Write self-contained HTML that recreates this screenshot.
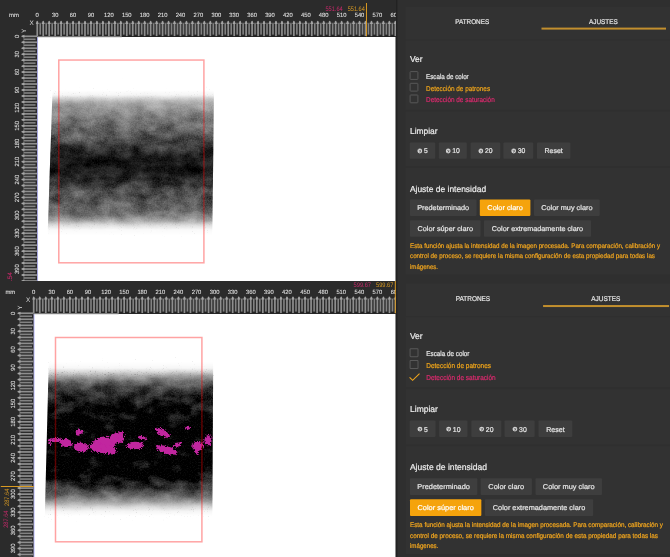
<!DOCTYPE html>
<html><head><meta charset="utf-8"><style>
html,body{margin:0;padding:0;}
body{width:670px;height:557px;overflow:hidden;background:#2a2a2a;position:relative;font-family:"Liberation Sans",sans-serif;}
.half{position:absolute;left:0;width:670px;overflow:hidden;will-change:transform;}
svg{position:absolute;left:0;top:0;font-family:"Liberation Sans",sans-serif;text-rendering:geometricPrecision;}
</style></head><body>

<div class="half" style="top:0px;height:281px;">
<svg width="670" height="281" viewBox="0 0 670 281">
<g transform=""><rect x="396" y="0" width="274" height="300" fill="#2c2c2c"/>
<rect x="398" y="0" width="272" height="300" fill="#2f2f2f"/>
<rect x="396" y="0" width="1.2" height="300" fill="#222222"/>
<rect x="405.5" y="7" width="264.5" height="32.5" fill="#323232"/>
<rect x="405.5" y="40.5" width="264.5" height="69.3" fill="#323232"/>
<rect x="405.5" y="111.4" width="264.5" height="54.900000000000006" fill="#323232"/>
<rect x="405.5" y="167.8" width="264.5" height="106.69999999999999" fill="#323232"/>
<text x="472.20" y="23.90" font-size="6.9" fill="#e4e4e4" stroke="#e4e4e4" stroke-width="0.2" text-anchor="middle" textLength="34.00" lengthAdjust="spacingAndGlyphs">PATRONES</text>
<text x="603.40" y="23.90" font-size="6.9" fill="#e4e4e4" stroke="#e4e4e4" stroke-width="0.2" text-anchor="middle" textLength="28.80" lengthAdjust="spacingAndGlyphs">AJUSTES</text>
<rect x="541.5" y="27.6" width="124.5" height="2" fill="#c28f2e"/>
<text x="409.90" y="62.20" font-size="8.6" fill="#ececec" stroke="#ececec" stroke-width="0.2" textLength="12.60" lengthAdjust="spacingAndGlyphs">Ver</text>
<rect x="410.1" y="71.60" width="7.8" height="7.8" fill="none" stroke="#585858" stroke-width="1" rx="0.6"/>
<text x="426.10" y="78.80" font-size="7.1" fill="#e8e8e8" stroke="#e8e8e8" stroke-width="0.2" textLength="42.60" lengthAdjust="spacingAndGlyphs">Escala de color</text>
<rect x="410.1" y="83.30" width="7.8" height="7.8" fill="none" stroke="#585858" stroke-width="1" rx="0.6"/>
<text x="426.10" y="90.50" font-size="7.1" fill="#f0a51a" stroke="#f0a51a" stroke-width="0.2" textLength="64.00" lengthAdjust="spacingAndGlyphs">Detección de patrones</text>
<rect x="410.1" y="95.00" width="7.8" height="7.8" fill="none" stroke="#585858" stroke-width="1" rx="0.6"/>
<text x="426.10" y="102.20" font-size="7.1" fill="#dc2a6e" stroke="#dc2a6e" stroke-width="0.2" textLength="68.60" lengthAdjust="spacingAndGlyphs">Detección de saturación</text>
<text x="410.00" y="134.30" font-size="8.6" fill="#ececec" stroke="#ececec" stroke-width="0.2" textLength="27.60" lengthAdjust="spacingAndGlyphs">Limpiar</text>
<rect x="409.70" y="142.4" width="25.50" height="16.3" fill="#3e3e3e" rx="1"/>
<circle cx="419.80" cy="151.0" r="2.4" fill="#d4d4d4"/>
<path d="M418.40 149.6 l2.6 2.6 M419.60 152.6 l1.2 -2.8" stroke="#3e3e3e" stroke-width="0.55" fill="none"/>
<text x="423.90" y="153.40" font-size="7.0" fill="#e8e8e8" stroke="#e8e8e8" stroke-width="0.2" textLength="3.70" lengthAdjust="spacingAndGlyphs">5</text>
<rect x="438.80" y="142.4" width="28.00" height="16.3" fill="#3e3e3e" rx="1"/>
<circle cx="448.20" cy="151.0" r="2.4" fill="#d4d4d4"/>
<path d="M446.80 149.6 l2.6 2.6 M448.00 152.6 l1.2 -2.8" stroke="#3e3e3e" stroke-width="0.55" fill="none"/>
<text x="452.30" y="153.40" font-size="7.0" fill="#e8e8e8" stroke="#e8e8e8" stroke-width="0.2" textLength="7.60" lengthAdjust="spacingAndGlyphs">10</text>
<rect x="470.60" y="142.4" width="29.70" height="16.3" fill="#3e3e3e" rx="1"/>
<circle cx="480.85" cy="151.0" r="2.4" fill="#d4d4d4"/>
<path d="M479.45 149.6 l2.6 2.6 M480.65 152.6 l1.2 -2.8" stroke="#3e3e3e" stroke-width="0.55" fill="none"/>
<text x="484.95" y="153.40" font-size="7.0" fill="#e8e8e8" stroke="#e8e8e8" stroke-width="0.2" textLength="7.60" lengthAdjust="spacingAndGlyphs">20</text>
<rect x="503.40" y="142.4" width="29.80" height="16.3" fill="#3e3e3e" rx="1"/>
<circle cx="513.70" cy="151.0" r="2.4" fill="#d4d4d4"/>
<path d="M512.30 149.6 l2.6 2.6 M513.50 152.6 l1.2 -2.8" stroke="#3e3e3e" stroke-width="0.55" fill="none"/>
<text x="517.80" y="153.40" font-size="7.0" fill="#e8e8e8" stroke="#e8e8e8" stroke-width="0.2" textLength="7.60" lengthAdjust="spacingAndGlyphs">30</text>
<rect x="537.00" y="142.4" width="33.40" height="16.3" fill="#3e3e3e" rx="1"/>
<text x="553.70" y="153.40" font-size="7.0" fill="#e8e8e8" stroke="#e8e8e8" stroke-width="0.2" text-anchor="middle" textLength="18.20" lengthAdjust="spacingAndGlyphs">Reset</text>
<text x="409.90" y="192.00" font-size="8.6" fill="#ececec" stroke="#ececec" stroke-width="0.2" textLength="76.20" lengthAdjust="spacingAndGlyphs">Ajuste de intensidad</text>
<rect x="409.90" y="199.6" width="66.60" height="16.40" fill="#3e3e3e" rx="1"/>
<text x="443.20" y="210.30" font-size="7.0" fill="#e6e6e6" stroke="#e6e6e6" stroke-width="0.2" text-anchor="middle" textLength="52.00" lengthAdjust="spacingAndGlyphs">Predeterminado</text>
<rect x="479.80" y="199.6" width="50.60" height="16.40" fill="#f5a30c" rx="1"/>
<text x="505.10" y="210.30" font-size="7.0" fill="#ffffff" stroke="#ffffff" stroke-width="0.2" text-anchor="middle" textLength="35.50" lengthAdjust="spacingAndGlyphs">Color claro</text>
<rect x="534.00" y="199.6" width="65.70" height="16.40" fill="#3e3e3e" rx="1"/>
<text x="566.85" y="210.30" font-size="7.0" fill="#e6e6e6" stroke="#e6e6e6" stroke-width="0.2" text-anchor="middle" textLength="51.20" lengthAdjust="spacingAndGlyphs">Color muy claro</text>
<rect x="410.00" y="220.2" width="70.50" height="16.60" fill="#3e3e3e" rx="1"/>
<text x="445.25" y="231.00" font-size="7.0" fill="#e6e6e6" stroke="#e6e6e6" stroke-width="0.2" text-anchor="middle" textLength="55.60" lengthAdjust="spacingAndGlyphs">Color súper claro</text>
<rect x="484.00" y="220.2" width="107.00" height="16.60" fill="#3e3e3e" rx="1"/>
<text x="537.50" y="231.00" font-size="7.0" fill="#e6e6e6" stroke="#e6e6e6" stroke-width="0.2" text-anchor="middle" textLength="91.30" lengthAdjust="spacingAndGlyphs">Color extremadamente claro</text>
<text x="410.00" y="247.90" font-size="6.7" fill="#f2a61e" stroke="#f2a61e" stroke-width="0.2" textLength="250.00" lengthAdjust="spacingAndGlyphs">Esta función ajusta la intensidad de la imagen procesada. Para comparación, calibración y</text>
<text x="410.00" y="258.35" font-size="6.7" fill="#f2a61e" stroke="#f2a61e" stroke-width="0.2" textLength="245.00" lengthAdjust="spacingAndGlyphs">control de proceso, se requiere la misma configuración de esta propiedad para todas las</text>
<text x="410.00" y="268.80" font-size="6.7" fill="#f2a61e" stroke="#f2a61e" stroke-width="0.2" textLength="28.00" lengthAdjust="spacingAndGlyphs">imágenes.</text></g>
<defs><clipPath id="vc0"><rect x="0" y="0" width="396" height="281"/></clipPath></defs>
<g clip-path="url(#vc0)">
<rect x="0" y="0" width="396" height="281" fill="#2b2b2b"/>
<rect x="37.25" y="37.00" width="358.75" height="244.70" fill="#ffffff"/>
<rect x="37.25" y="37.00" width="0.8" height="244.70" fill="#8080ff" opacity="0.6"/>
<rect x="395" y="37.00" width="1" height="244.70" fill="#8c8c8c"/>
<defs>
<linearGradient id="g1" x1="0" y1="90" x2="0" y2="235" gradientUnits="userSpaceOnUse"><stop offset="0.0000" stop-color="#000" stop-opacity="0.000"/><stop offset="0.0345" stop-color="#000" stop-opacity="0.040"/><stop offset="0.0552" stop-color="#000" stop-opacity="0.160"/><stop offset="0.0759" stop-color="#000" stop-opacity="0.280"/><stop offset="0.0966" stop-color="#000" stop-opacity="0.350"/><stop offset="0.1379" stop-color="#000" stop-opacity="0.420"/><stop offset="0.1793" stop-color="#000" stop-opacity="0.490"/><stop offset="0.2276" stop-color="#000" stop-opacity="0.560"/><stop offset="0.2759" stop-color="#000" stop-opacity="0.620"/><stop offset="0.3448" stop-color="#000" stop-opacity="0.680"/><stop offset="0.4138" stop-color="#000" stop-opacity="0.760"/><stop offset="0.4897" stop-color="#000" stop-opacity="0.850"/><stop offset="0.5724" stop-color="#000" stop-opacity="0.840"/><stop offset="0.6414" stop-color="#000" stop-opacity="0.740"/><stop offset="0.7034" stop-color="#000" stop-opacity="0.680"/><stop offset="0.7655" stop-color="#000" stop-opacity="0.660"/><stop offset="0.8276" stop-color="#000" stop-opacity="0.600"/><stop offset="0.8690" stop-color="#000" stop-opacity="0.500"/><stop offset="0.9034" stop-color="#000" stop-opacity="0.340"/><stop offset="0.9310" stop-color="#000" stop-opacity="0.140"/><stop offset="0.9655" stop-color="#000" stop-opacity="0.020"/><stop offset="1.0000" stop-color="#000" stop-opacity="0.000"/></linearGradient>
<clipPath id="c1"><polygon points="52.60,88.00 214.00,88.00 212.30,236.00 47.60,236.00"/></clipPath>
<filter id="f1" x="42.6" y="85" width="176.4" height="155" filterUnits="userSpaceOnUse" color-interpolation-filters="sRGB">
<feTurbulence type="fractalNoise" baseFrequency="0.06 0.09" numOctaves="4" seed="3" result="t"/>
<feColorMatrix in="t" type="matrix" values="0 0 0 0 0  0 0 0 0 0  0 0 0 0 0  1.2 0 0 0 -0.09999999999999998" result="n"/>
<feTurbulence type="fractalNoise" baseFrequency="0.7" numOctaves="2" seed="10" result="t2"/>
<feColorMatrix in="t2" type="matrix" values="0 0 0 0 0  0 0 0 0 0  0 0 0 0 0  1.6 0 0 0 -0.30000000000000004" result="n2"/>
<feComposite in="SourceGraphic" in2="n" operator="arithmetic" k1="0.55" k2="0.73" k3="0" k4="0" result="m"/>
<feComposite in="m" in2="n2" operator="arithmetic" k1="0.18" k2="0.91" k3="0" k4="0"/>
</filter>
</defs>
<g clip-path="url(#c1)"><g filter="url(#f1)"><rect x="45.6" y="90" width="170.4" height="145" fill="url(#g1)"/></g></g><defs><linearGradient id="band1" x1="0" y1="138" x2="0" y2="191" gradientUnits="userSpaceOnUse"><stop offset="0.000" stop-color="#000" stop-opacity="0"/><stop offset="0.245" stop-color="#000" stop-opacity="0.25"/><stop offset="0.434" stop-color="#000" stop-opacity="0.42"/><stop offset="0.623" stop-color="#000" stop-opacity="0.42"/><stop offset="0.811" stop-color="#000" stop-opacity="0.2"/><stop offset="1.000" stop-color="#000" stop-opacity="0"/></linearGradient></defs><g clip-path="url(#c1)"><rect x="46" y="138" width="170" height="53" fill="url(#band1)"/></g><defs><linearGradient id="sgt1" x1="0" y1="78" x2="0" y2="99" gradientUnits="userSpaceOnUse"><stop offset="0" stop-color="#000" stop-opacity="0.0"/><stop offset="1" stop-color="#000" stop-opacity="0.2"/></linearGradient>
<filter id="sft1" x="50" y="78" width="164" height="21" filterUnits="userSpaceOnUse" color-interpolation-filters="sRGB">
<feTurbulence type="fractalNoise" baseFrequency="0.93" numOctaves="1" seed="21" result="t"/>
<feColorMatrix in="t" type="matrix" values="0 0 0 0 0  0 0 0 0 0  0 0 0 0 0  1 0 0 0 0" result="n"/>
<feComposite in="SourceGraphic" in2="n" operator="arithmetic" k1="0" k2="3" k3="3" k4="-2.4000000000000004" result="s"/>
<feColorMatrix in="s" type="matrix" values="0 0 0 0 0  0 0 0 0 0  0 0 0 0 0  0 0 0 0.2 0"/>
</filter></defs>
<rect x="50" y="78" width="164" height="21" fill="url(#sgt1)" filter="url(#sft1)"/><defs><linearGradient id="sgt2" x1="0" y1="224" x2="0" y2="242" gradientUnits="userSpaceOnUse"><stop offset="0" stop-color="#000" stop-opacity="0.2"/><stop offset="1" stop-color="#000" stop-opacity="0.0"/></linearGradient>
<filter id="sft2" x="47" y="224" width="166" height="18" filterUnits="userSpaceOnUse" color-interpolation-filters="sRGB">
<feTurbulence type="fractalNoise" baseFrequency="0.93" numOctaves="1" seed="22" result="t"/>
<feColorMatrix in="t" type="matrix" values="0 0 0 0 0  0 0 0 0 0  0 0 0 0 0  1 0 0 0 0" result="n"/>
<feComposite in="SourceGraphic" in2="n" operator="arithmetic" k1="0" k2="3" k3="3" k4="-2.4000000000000004" result="s"/>
<feColorMatrix in="s" type="matrix" values="0 0 0 0 0  0 0 0 0 0  0 0 0 0 0  0 0 0 0.2 0"/>
</filter></defs>
<rect x="47" y="224" width="166" height="18" fill="url(#sgt2)" filter="url(#sft2)"/>
<rect x="37.25" y="22.70" width="358.75" height="0.9" fill="#5e5e5e"/>
<rect x="37.25" y="35.70" width="358.75" height="1.0" fill="#1e1e1e"/>
<rect x="36.40" y="21.20" width="1.7" height="14.90" fill="#8e8e8e"/>
<path d="M35.75 23.90 L37.25 20.50 L38.75 23.90 Z" fill="#a6a6a6"/>
<rect x="39.43" y="23.30" width="1.6" height="11.30" fill="#828282"/>
<rect x="42.37" y="21.20" width="1.7" height="14.90" fill="#8e8e8e"/>
<path d="M41.72 23.90 L43.22 20.50 L44.72 23.90 Z" fill="#a6a6a6"/>
<rect x="45.40" y="23.30" width="1.6" height="11.30" fill="#828282"/>
<rect x="48.34" y="21.20" width="1.7" height="14.90" fill="#8e8e8e"/>
<path d="M47.69 23.90 L49.19 20.50 L50.69 23.90 Z" fill="#a6a6a6"/>
<rect x="51.37" y="23.30" width="1.6" height="11.30" fill="#828282"/>
<rect x="54.30" y="21.20" width="1.7" height="14.90" fill="#8e8e8e"/>
<path d="M53.65 23.90 L55.15 20.50 L56.65 23.90 Z" fill="#a6a6a6"/>
<rect x="57.34" y="23.30" width="1.6" height="11.30" fill="#828282"/>
<rect x="60.27" y="21.20" width="1.7" height="14.90" fill="#8e8e8e"/>
<path d="M59.62 23.90 L61.12 20.50 L62.62 23.90 Z" fill="#a6a6a6"/>
<rect x="63.31" y="23.30" width="1.6" height="11.30" fill="#828282"/>
<rect x="66.24" y="21.20" width="1.7" height="14.90" fill="#8e8e8e"/>
<path d="M65.59 23.90 L67.09 20.50 L68.59 23.90 Z" fill="#a6a6a6"/>
<rect x="69.27" y="23.30" width="1.6" height="11.30" fill="#828282"/>
<rect x="72.21" y="21.20" width="1.7" height="14.90" fill="#8e8e8e"/>
<path d="M71.56 23.90 L73.06 20.50 L74.56 23.90 Z" fill="#a6a6a6"/>
<rect x="75.24" y="23.30" width="1.6" height="11.30" fill="#828282"/>
<rect x="78.18" y="21.20" width="1.7" height="14.90" fill="#8e8e8e"/>
<path d="M77.53 23.90 L79.03 20.50 L80.53 23.90 Z" fill="#a6a6a6"/>
<rect x="81.21" y="23.30" width="1.6" height="11.30" fill="#828282"/>
<rect x="84.14" y="21.20" width="1.7" height="14.90" fill="#8e8e8e"/>
<path d="M83.49 23.90 L84.99 20.50 L86.49 23.90 Z" fill="#a6a6a6"/>
<rect x="87.18" y="23.30" width="1.6" height="11.30" fill="#828282"/>
<rect x="90.11" y="21.20" width="1.7" height="14.90" fill="#8e8e8e"/>
<path d="M89.46 23.90 L90.96 20.50 L92.46 23.90 Z" fill="#a6a6a6"/>
<rect x="93.15" y="23.30" width="1.6" height="11.30" fill="#828282"/>
<rect x="96.08" y="21.20" width="1.7" height="14.90" fill="#8e8e8e"/>
<path d="M95.43 23.90 L96.93 20.50 L98.43 23.90 Z" fill="#a6a6a6"/>
<rect x="99.11" y="23.30" width="1.6" height="11.30" fill="#828282"/>
<rect x="102.05" y="21.20" width="1.7" height="14.90" fill="#8e8e8e"/>
<path d="M101.40 23.90 L102.90 20.50 L104.40 23.90 Z" fill="#a6a6a6"/>
<rect x="105.08" y="23.30" width="1.6" height="11.30" fill="#828282"/>
<rect x="108.02" y="21.20" width="1.7" height="14.90" fill="#8e8e8e"/>
<path d="M107.37 23.90 L108.87 20.50 L110.37 23.90 Z" fill="#a6a6a6"/>
<rect x="111.05" y="23.30" width="1.6" height="11.30" fill="#828282"/>
<rect x="113.98" y="21.20" width="1.7" height="14.90" fill="#8e8e8e"/>
<path d="M113.33 23.90 L114.83 20.50 L116.33 23.90 Z" fill="#a6a6a6"/>
<rect x="117.02" y="23.30" width="1.6" height="11.30" fill="#828282"/>
<rect x="119.95" y="21.20" width="1.7" height="14.90" fill="#8e8e8e"/>
<path d="M119.30 23.90 L120.80 20.50 L122.30 23.90 Z" fill="#a6a6a6"/>
<rect x="122.99" y="23.30" width="1.6" height="11.30" fill="#828282"/>
<rect x="125.92" y="21.20" width="1.7" height="14.90" fill="#8e8e8e"/>
<path d="M125.27 23.90 L126.77 20.50 L128.27 23.90 Z" fill="#a6a6a6"/>
<rect x="128.95" y="23.30" width="1.6" height="11.30" fill="#828282"/>
<rect x="131.89" y="21.20" width="1.7" height="14.90" fill="#8e8e8e"/>
<path d="M131.24 23.90 L132.74 20.50 L134.24 23.90 Z" fill="#a6a6a6"/>
<rect x="134.92" y="23.30" width="1.6" height="11.30" fill="#828282"/>
<rect x="137.86" y="21.20" width="1.7" height="14.90" fill="#8e8e8e"/>
<path d="M137.21 23.90 L138.71 20.50 L140.21 23.90 Z" fill="#a6a6a6"/>
<rect x="140.89" y="23.30" width="1.6" height="11.30" fill="#828282"/>
<rect x="143.82" y="21.20" width="1.7" height="14.90" fill="#8e8e8e"/>
<path d="M143.17 23.90 L144.67 20.50 L146.17 23.90 Z" fill="#a6a6a6"/>
<rect x="146.86" y="23.30" width="1.6" height="11.30" fill="#828282"/>
<rect x="149.79" y="21.20" width="1.7" height="14.90" fill="#8e8e8e"/>
<path d="M149.14 23.90 L150.64 20.50 L152.14 23.90 Z" fill="#a6a6a6"/>
<rect x="152.83" y="23.30" width="1.6" height="11.30" fill="#828282"/>
<rect x="155.76" y="21.20" width="1.7" height="14.90" fill="#8e8e8e"/>
<path d="M155.11 23.90 L156.61 20.50 L158.11 23.90 Z" fill="#a6a6a6"/>
<rect x="158.79" y="23.30" width="1.6" height="11.30" fill="#828282"/>
<rect x="161.73" y="21.20" width="1.7" height="14.90" fill="#8e8e8e"/>
<path d="M161.08 23.90 L162.58 20.50 L164.08 23.90 Z" fill="#a6a6a6"/>
<rect x="164.76" y="23.30" width="1.6" height="11.30" fill="#828282"/>
<rect x="167.70" y="21.20" width="1.7" height="14.90" fill="#8e8e8e"/>
<path d="M167.05 23.90 L168.55 20.50 L170.05 23.90 Z" fill="#a6a6a6"/>
<rect x="170.73" y="23.30" width="1.6" height="11.30" fill="#828282"/>
<rect x="173.66" y="21.20" width="1.7" height="14.90" fill="#8e8e8e"/>
<path d="M173.01 23.90 L174.51 20.50 L176.01 23.90 Z" fill="#a6a6a6"/>
<rect x="176.70" y="23.30" width="1.6" height="11.30" fill="#828282"/>
<rect x="179.63" y="21.20" width="1.7" height="14.90" fill="#8e8e8e"/>
<path d="M178.98 23.90 L180.48 20.50 L181.98 23.90 Z" fill="#a6a6a6"/>
<rect x="182.67" y="23.30" width="1.6" height="11.30" fill="#828282"/>
<rect x="185.60" y="21.20" width="1.7" height="14.90" fill="#8e8e8e"/>
<path d="M184.95 23.90 L186.45 20.50 L187.95 23.90 Z" fill="#a6a6a6"/>
<rect x="188.63" y="23.30" width="1.6" height="11.30" fill="#828282"/>
<rect x="191.57" y="21.20" width="1.7" height="14.90" fill="#8e8e8e"/>
<path d="M190.92 23.90 L192.42 20.50 L193.92 23.90 Z" fill="#a6a6a6"/>
<rect x="194.60" y="23.30" width="1.6" height="11.30" fill="#828282"/>
<rect x="197.54" y="21.20" width="1.7" height="14.90" fill="#8e8e8e"/>
<path d="M196.89 23.90 L198.39 20.50 L199.89 23.90 Z" fill="#a6a6a6"/>
<rect x="200.57" y="23.30" width="1.6" height="11.30" fill="#828282"/>
<rect x="203.50" y="21.20" width="1.7" height="14.90" fill="#8e8e8e"/>
<path d="M202.85 23.90 L204.35 20.50 L205.85 23.90 Z" fill="#a6a6a6"/>
<rect x="206.54" y="23.30" width="1.6" height="11.30" fill="#828282"/>
<rect x="209.47" y="21.20" width="1.7" height="14.90" fill="#8e8e8e"/>
<path d="M208.82 23.90 L210.32 20.50 L211.82 23.90 Z" fill="#a6a6a6"/>
<rect x="212.51" y="23.30" width="1.6" height="11.30" fill="#828282"/>
<rect x="215.44" y="21.20" width="1.7" height="14.90" fill="#8e8e8e"/>
<path d="M214.79 23.90 L216.29 20.50 L217.79 23.90 Z" fill="#a6a6a6"/>
<rect x="218.47" y="23.30" width="1.6" height="11.30" fill="#828282"/>
<rect x="221.41" y="21.20" width="1.7" height="14.90" fill="#8e8e8e"/>
<path d="M220.76 23.90 L222.26 20.50 L223.76 23.90 Z" fill="#a6a6a6"/>
<rect x="224.44" y="23.30" width="1.6" height="11.30" fill="#828282"/>
<rect x="227.38" y="21.20" width="1.7" height="14.90" fill="#8e8e8e"/>
<path d="M226.73 23.90 L228.23 20.50 L229.73 23.90 Z" fill="#a6a6a6"/>
<rect x="230.41" y="23.30" width="1.6" height="11.30" fill="#828282"/>
<rect x="233.34" y="21.20" width="1.7" height="14.90" fill="#8e8e8e"/>
<path d="M232.69 23.90 L234.19 20.50 L235.69 23.90 Z" fill="#a6a6a6"/>
<rect x="236.38" y="23.30" width="1.6" height="11.30" fill="#828282"/>
<rect x="239.31" y="21.20" width="1.7" height="14.90" fill="#8e8e8e"/>
<path d="M238.66 23.90 L240.16 20.50 L241.66 23.90 Z" fill="#a6a6a6"/>
<rect x="242.35" y="23.30" width="1.6" height="11.30" fill="#828282"/>
<rect x="245.28" y="21.20" width="1.7" height="14.90" fill="#8e8e8e"/>
<path d="M244.63 23.90 L246.13 20.50 L247.63 23.90 Z" fill="#a6a6a6"/>
<rect x="248.31" y="23.30" width="1.6" height="11.30" fill="#828282"/>
<rect x="251.25" y="21.20" width="1.7" height="14.90" fill="#8e8e8e"/>
<path d="M250.60 23.90 L252.10 20.50 L253.60 23.90 Z" fill="#a6a6a6"/>
<rect x="254.28" y="23.30" width="1.6" height="11.30" fill="#828282"/>
<rect x="257.22" y="21.20" width="1.7" height="14.90" fill="#8e8e8e"/>
<path d="M256.57 23.90 L258.07 20.50 L259.57 23.90 Z" fill="#a6a6a6"/>
<rect x="260.25" y="23.30" width="1.6" height="11.30" fill="#828282"/>
<rect x="263.18" y="21.20" width="1.7" height="14.90" fill="#8e8e8e"/>
<path d="M262.53 23.90 L264.03 20.50 L265.53 23.90 Z" fill="#a6a6a6"/>
<rect x="266.22" y="23.30" width="1.6" height="11.30" fill="#828282"/>
<rect x="269.15" y="21.20" width="1.7" height="14.90" fill="#8e8e8e"/>
<path d="M268.50 23.90 L270.00 20.50 L271.50 23.90 Z" fill="#a6a6a6"/>
<rect x="272.19" y="23.30" width="1.6" height="11.30" fill="#828282"/>
<rect x="275.12" y="21.20" width="1.7" height="14.90" fill="#8e8e8e"/>
<path d="M274.47 23.90 L275.97 20.50 L277.47 23.90 Z" fill="#a6a6a6"/>
<rect x="278.15" y="23.30" width="1.6" height="11.30" fill="#828282"/>
<rect x="281.09" y="21.20" width="1.7" height="14.90" fill="#8e8e8e"/>
<path d="M280.44 23.90 L281.94 20.50 L283.44 23.90 Z" fill="#a6a6a6"/>
<rect x="284.12" y="23.30" width="1.6" height="11.30" fill="#828282"/>
<rect x="287.06" y="21.20" width="1.7" height="14.90" fill="#8e8e8e"/>
<path d="M286.41 23.90 L287.91 20.50 L289.41 23.90 Z" fill="#a6a6a6"/>
<rect x="290.09" y="23.30" width="1.6" height="11.30" fill="#828282"/>
<rect x="293.02" y="21.20" width="1.7" height="14.90" fill="#8e8e8e"/>
<path d="M292.37 23.90 L293.87 20.50 L295.37 23.90 Z" fill="#a6a6a6"/>
<rect x="296.06" y="23.30" width="1.6" height="11.30" fill="#828282"/>
<rect x="298.99" y="21.20" width="1.7" height="14.90" fill="#8e8e8e"/>
<path d="M298.34 23.90 L299.84 20.50 L301.34 23.90 Z" fill="#a6a6a6"/>
<rect x="302.03" y="23.30" width="1.6" height="11.30" fill="#828282"/>
<rect x="304.96" y="21.20" width="1.7" height="14.90" fill="#8e8e8e"/>
<path d="M304.31 23.90 L305.81 20.50 L307.31 23.90 Z" fill="#a6a6a6"/>
<rect x="307.99" y="23.30" width="1.6" height="11.30" fill="#828282"/>
<rect x="310.93" y="21.20" width="1.7" height="14.90" fill="#8e8e8e"/>
<path d="M310.28 23.90 L311.78 20.50 L313.28 23.90 Z" fill="#a6a6a6"/>
<rect x="313.96" y="23.30" width="1.6" height="11.30" fill="#828282"/>
<rect x="316.90" y="21.20" width="1.7" height="14.90" fill="#8e8e8e"/>
<path d="M316.25 23.90 L317.75 20.50 L319.25 23.90 Z" fill="#a6a6a6"/>
<rect x="319.93" y="23.30" width="1.6" height="11.30" fill="#828282"/>
<rect x="322.86" y="21.20" width="1.7" height="14.90" fill="#8e8e8e"/>
<path d="M322.21 23.90 L323.71 20.50 L325.21 23.90 Z" fill="#a6a6a6"/>
<rect x="325.90" y="23.30" width="1.6" height="11.30" fill="#828282"/>
<rect x="328.83" y="21.20" width="1.7" height="14.90" fill="#8e8e8e"/>
<path d="M328.18 23.90 L329.68 20.50 L331.18 23.90 Z" fill="#a6a6a6"/>
<rect x="331.87" y="23.30" width="1.6" height="11.30" fill="#828282"/>
<rect x="334.80" y="21.20" width="1.7" height="14.90" fill="#8e8e8e"/>
<path d="M334.15 23.90 L335.65 20.50 L337.15 23.90 Z" fill="#a6a6a6"/>
<rect x="337.83" y="23.30" width="1.6" height="11.30" fill="#828282"/>
<rect x="340.77" y="21.20" width="1.7" height="14.90" fill="#8e8e8e"/>
<path d="M340.12 23.90 L341.62 20.50 L343.12 23.90 Z" fill="#a6a6a6"/>
<rect x="343.80" y="23.30" width="1.6" height="11.30" fill="#828282"/>
<rect x="346.74" y="21.20" width="1.7" height="14.90" fill="#8e8e8e"/>
<path d="M346.09 23.90 L347.59 20.50 L349.09 23.90 Z" fill="#a6a6a6"/>
<rect x="349.77" y="23.30" width="1.6" height="11.30" fill="#828282"/>
<rect x="352.70" y="21.20" width="1.7" height="14.90" fill="#8e8e8e"/>
<path d="M352.05 23.90 L353.55 20.50 L355.05 23.90 Z" fill="#a6a6a6"/>
<rect x="355.74" y="23.30" width="1.6" height="11.30" fill="#828282"/>
<rect x="358.67" y="21.20" width="1.7" height="14.90" fill="#8e8e8e"/>
<path d="M358.02 23.90 L359.52 20.50 L361.02 23.90 Z" fill="#a6a6a6"/>
<rect x="361.71" y="23.30" width="1.6" height="11.30" fill="#828282"/>
<rect x="364.64" y="21.20" width="1.7" height="14.90" fill="#8e8e8e"/>
<path d="M363.99 23.90 L365.49 20.50 L366.99 23.90 Z" fill="#a6a6a6"/>
<rect x="367.67" y="23.30" width="1.6" height="11.30" fill="#828282"/>
<rect x="370.61" y="21.20" width="1.7" height="14.90" fill="#8e8e8e"/>
<path d="M369.96 23.90 L371.46 20.50 L372.96 23.90 Z" fill="#a6a6a6"/>
<rect x="373.64" y="23.30" width="1.6" height="11.30" fill="#828282"/>
<rect x="376.58" y="21.20" width="1.7" height="14.90" fill="#8e8e8e"/>
<path d="M375.93 23.90 L377.43 20.50 L378.93 23.90 Z" fill="#a6a6a6"/>
<rect x="379.61" y="23.30" width="1.6" height="11.30" fill="#828282"/>
<rect x="382.54" y="21.20" width="1.7" height="14.90" fill="#8e8e8e"/>
<path d="M381.89 23.90 L383.39 20.50 L384.89 23.90 Z" fill="#a6a6a6"/>
<rect x="385.58" y="23.30" width="1.6" height="11.30" fill="#828282"/>
<rect x="388.51" y="21.20" width="1.7" height="14.90" fill="#8e8e8e"/>
<path d="M387.86 23.90 L389.36 20.50 L390.86 23.90 Z" fill="#a6a6a6"/>
<rect x="391.55" y="23.30" width="1.6" height="11.30" fill="#828282"/>
<rect x="394.48" y="21.20" width="1.7" height="14.90" fill="#8e8e8e"/>
<path d="M393.83 23.90 L395.33 20.50 L396.83 23.90 Z" fill="#a6a6a6"/>
<rect x="23.25" y="36.30" width="0.9" height="244.70" fill="#5e5e5e"/>
<rect x="21.75" y="35.45" width="15.30" height="1.7" fill="#8e8e8e"/>
<path d="M24.45 34.80 L21.05 36.30 L24.45 37.80 Z" fill="#a6a6a6"/>
<rect x="23.85" y="38.48" width="11.70" height="1.6" fill="#828282"/>
<rect x="21.75" y="41.42" width="15.30" height="1.7" fill="#8e8e8e"/>
<path d="M24.45 40.77 L21.05 42.27 L24.45 43.77 Z" fill="#a6a6a6"/>
<rect x="23.85" y="44.45" width="11.70" height="1.6" fill="#828282"/>
<rect x="21.75" y="47.39" width="15.30" height="1.7" fill="#8e8e8e"/>
<path d="M24.45 46.74 L21.05 48.24 L24.45 49.74 Z" fill="#a6a6a6"/>
<rect x="23.85" y="50.42" width="11.70" height="1.6" fill="#828282"/>
<rect x="21.75" y="53.35" width="15.30" height="1.7" fill="#8e8e8e"/>
<path d="M24.45 52.70 L21.05 54.20 L24.45 55.70 Z" fill="#a6a6a6"/>
<rect x="23.85" y="56.39" width="11.70" height="1.6" fill="#828282"/>
<rect x="21.75" y="59.32" width="15.30" height="1.7" fill="#8e8e8e"/>
<path d="M24.45 58.67 L21.05 60.17 L24.45 61.67 Z" fill="#a6a6a6"/>
<rect x="23.85" y="62.36" width="11.70" height="1.6" fill="#828282"/>
<rect x="21.75" y="65.29" width="15.30" height="1.7" fill="#8e8e8e"/>
<path d="M24.45 64.64 L21.05 66.14 L24.45 67.64 Z" fill="#a6a6a6"/>
<rect x="23.85" y="68.32" width="11.70" height="1.6" fill="#828282"/>
<rect x="21.75" y="71.26" width="15.30" height="1.7" fill="#8e8e8e"/>
<path d="M24.45 70.61 L21.05 72.11 L24.45 73.61 Z" fill="#a6a6a6"/>
<rect x="23.85" y="74.29" width="11.70" height="1.6" fill="#828282"/>
<rect x="21.75" y="77.23" width="15.30" height="1.7" fill="#8e8e8e"/>
<path d="M24.45 76.58 L21.05 78.08 L24.45 79.58 Z" fill="#a6a6a6"/>
<rect x="23.85" y="80.26" width="11.70" height="1.6" fill="#828282"/>
<rect x="21.75" y="83.19" width="15.30" height="1.7" fill="#8e8e8e"/>
<path d="M24.45 82.54 L21.05 84.04 L24.45 85.54 Z" fill="#a6a6a6"/>
<rect x="23.85" y="86.23" width="11.70" height="1.6" fill="#828282"/>
<rect x="21.75" y="89.16" width="15.30" height="1.7" fill="#8e8e8e"/>
<path d="M24.45 88.51 L21.05 90.01 L24.45 91.51 Z" fill="#a6a6a6"/>
<rect x="23.85" y="92.20" width="11.70" height="1.6" fill="#828282"/>
<rect x="21.75" y="95.13" width="15.30" height="1.7" fill="#8e8e8e"/>
<path d="M24.45 94.48 L21.05 95.98 L24.45 97.48 Z" fill="#a6a6a6"/>
<rect x="23.85" y="98.16" width="11.70" height="1.6" fill="#828282"/>
<rect x="21.75" y="101.10" width="15.30" height="1.7" fill="#8e8e8e"/>
<path d="M24.45 100.45 L21.05 101.95 L24.45 103.45 Z" fill="#a6a6a6"/>
<rect x="23.85" y="104.13" width="11.70" height="1.6" fill="#828282"/>
<rect x="21.75" y="107.07" width="15.30" height="1.7" fill="#8e8e8e"/>
<path d="M24.45 106.42 L21.05 107.92 L24.45 109.42 Z" fill="#a6a6a6"/>
<rect x="23.85" y="110.10" width="11.70" height="1.6" fill="#828282"/>
<rect x="21.75" y="113.03" width="15.30" height="1.7" fill="#8e8e8e"/>
<path d="M24.45 112.38 L21.05 113.88 L24.45 115.38 Z" fill="#a6a6a6"/>
<rect x="23.85" y="116.07" width="11.70" height="1.6" fill="#828282"/>
<rect x="21.75" y="119.00" width="15.30" height="1.7" fill="#8e8e8e"/>
<path d="M24.45 118.35 L21.05 119.85 L24.45 121.35 Z" fill="#a6a6a6"/>
<rect x="23.85" y="122.04" width="11.70" height="1.6" fill="#828282"/>
<rect x="21.75" y="124.97" width="15.30" height="1.7" fill="#8e8e8e"/>
<path d="M24.45 124.32 L21.05 125.82 L24.45 127.32 Z" fill="#a6a6a6"/>
<rect x="23.85" y="128.00" width="11.70" height="1.6" fill="#828282"/>
<rect x="21.75" y="130.94" width="15.30" height="1.7" fill="#8e8e8e"/>
<path d="M24.45 130.29 L21.05 131.79 L24.45 133.29 Z" fill="#a6a6a6"/>
<rect x="23.85" y="133.97" width="11.70" height="1.6" fill="#828282"/>
<rect x="21.75" y="136.91" width="15.30" height="1.7" fill="#8e8e8e"/>
<path d="M24.45 136.26 L21.05 137.76 L24.45 139.26 Z" fill="#a6a6a6"/>
<rect x="23.85" y="139.94" width="11.70" height="1.6" fill="#828282"/>
<rect x="21.75" y="142.87" width="15.30" height="1.7" fill="#8e8e8e"/>
<path d="M24.45 142.22 L21.05 143.72 L24.45 145.22 Z" fill="#a6a6a6"/>
<rect x="23.85" y="145.91" width="11.70" height="1.6" fill="#828282"/>
<rect x="21.75" y="148.84" width="15.30" height="1.7" fill="#8e8e8e"/>
<path d="M24.45 148.19 L21.05 149.69 L24.45 151.19 Z" fill="#a6a6a6"/>
<rect x="23.85" y="151.88" width="11.70" height="1.6" fill="#828282"/>
<rect x="21.75" y="154.81" width="15.30" height="1.7" fill="#8e8e8e"/>
<path d="M24.45 154.16 L21.05 155.66 L24.45 157.16 Z" fill="#a6a6a6"/>
<rect x="23.85" y="157.84" width="11.70" height="1.6" fill="#828282"/>
<rect x="21.75" y="160.78" width="15.30" height="1.7" fill="#8e8e8e"/>
<path d="M24.45 160.13 L21.05 161.63 L24.45 163.13 Z" fill="#a6a6a6"/>
<rect x="23.85" y="163.81" width="11.70" height="1.6" fill="#828282"/>
<rect x="21.75" y="166.75" width="15.30" height="1.7" fill="#8e8e8e"/>
<path d="M24.45 166.10 L21.05 167.60 L24.45 169.10 Z" fill="#a6a6a6"/>
<rect x="23.85" y="169.78" width="11.70" height="1.6" fill="#828282"/>
<rect x="21.75" y="172.71" width="15.30" height="1.7" fill="#8e8e8e"/>
<path d="M24.45 172.06 L21.05 173.56 L24.45 175.06 Z" fill="#a6a6a6"/>
<rect x="23.85" y="175.75" width="11.70" height="1.6" fill="#828282"/>
<rect x="21.75" y="178.68" width="15.30" height="1.7" fill="#8e8e8e"/>
<path d="M24.45 178.03 L21.05 179.53 L24.45 181.03 Z" fill="#a6a6a6"/>
<rect x="23.85" y="181.72" width="11.70" height="1.6" fill="#828282"/>
<rect x="21.75" y="184.65" width="15.30" height="1.7" fill="#8e8e8e"/>
<path d="M24.45 184.00 L21.05 185.50 L24.45 187.00 Z" fill="#a6a6a6"/>
<rect x="23.85" y="187.68" width="11.70" height="1.6" fill="#828282"/>
<rect x="21.75" y="190.62" width="15.30" height="1.7" fill="#8e8e8e"/>
<path d="M24.45 189.97 L21.05 191.47 L24.45 192.97 Z" fill="#a6a6a6"/>
<rect x="23.85" y="193.65" width="11.70" height="1.6" fill="#828282"/>
<rect x="21.75" y="196.59" width="15.30" height="1.7" fill="#8e8e8e"/>
<path d="M24.45 195.94 L21.05 197.44 L24.45 198.94 Z" fill="#a6a6a6"/>
<rect x="23.85" y="199.62" width="11.70" height="1.6" fill="#828282"/>
<rect x="21.75" y="202.55" width="15.30" height="1.7" fill="#8e8e8e"/>
<path d="M24.45 201.90 L21.05 203.40 L24.45 204.90 Z" fill="#a6a6a6"/>
<rect x="23.85" y="205.59" width="11.70" height="1.6" fill="#828282"/>
<rect x="21.75" y="208.52" width="15.30" height="1.7" fill="#8e8e8e"/>
<path d="M24.45 207.87 L21.05 209.37 L24.45 210.87 Z" fill="#a6a6a6"/>
<rect x="23.85" y="211.56" width="11.70" height="1.6" fill="#828282"/>
<rect x="21.75" y="214.49" width="15.30" height="1.7" fill="#8e8e8e"/>
<path d="M24.45 213.84 L21.05 215.34 L24.45 216.84 Z" fill="#a6a6a6"/>
<rect x="23.85" y="217.52" width="11.70" height="1.6" fill="#828282"/>
<rect x="21.75" y="220.46" width="15.30" height="1.7" fill="#8e8e8e"/>
<path d="M24.45 219.81 L21.05 221.31 L24.45 222.81 Z" fill="#a6a6a6"/>
<rect x="23.85" y="223.49" width="11.70" height="1.6" fill="#828282"/>
<rect x="21.75" y="226.43" width="15.30" height="1.7" fill="#8e8e8e"/>
<path d="M24.45 225.78 L21.05 227.28 L24.45 228.78 Z" fill="#a6a6a6"/>
<rect x="23.85" y="229.46" width="11.70" height="1.6" fill="#828282"/>
<rect x="21.75" y="232.39" width="15.30" height="1.7" fill="#8e8e8e"/>
<path d="M24.45 231.74 L21.05 233.24 L24.45 234.74 Z" fill="#a6a6a6"/>
<rect x="23.85" y="235.43" width="11.70" height="1.6" fill="#828282"/>
<rect x="21.75" y="238.36" width="15.30" height="1.7" fill="#8e8e8e"/>
<path d="M24.45 237.71 L21.05 239.21 L24.45 240.71 Z" fill="#a6a6a6"/>
<rect x="23.85" y="241.40" width="11.70" height="1.6" fill="#828282"/>
<rect x="21.75" y="244.33" width="15.30" height="1.7" fill="#8e8e8e"/>
<path d="M24.45 243.68 L21.05 245.18 L24.45 246.68 Z" fill="#a6a6a6"/>
<rect x="23.85" y="247.36" width="11.70" height="1.6" fill="#828282"/>
<rect x="21.75" y="250.30" width="15.30" height="1.7" fill="#8e8e8e"/>
<path d="M24.45 249.65 L21.05 251.15 L24.45 252.65 Z" fill="#a6a6a6"/>
<rect x="23.85" y="253.33" width="11.70" height="1.6" fill="#828282"/>
<rect x="21.75" y="256.27" width="15.30" height="1.7" fill="#8e8e8e"/>
<path d="M24.45 255.62 L21.05 257.12 L24.45 258.62 Z" fill="#a6a6a6"/>
<rect x="23.85" y="259.30" width="11.70" height="1.6" fill="#828282"/>
<rect x="21.75" y="262.23" width="15.30" height="1.7" fill="#8e8e8e"/>
<path d="M24.45 261.58 L21.05 263.08 L24.45 264.58 Z" fill="#a6a6a6"/>
<rect x="23.85" y="265.27" width="11.70" height="1.6" fill="#828282"/>
<rect x="21.75" y="268.20" width="15.30" height="1.7" fill="#8e8e8e"/>
<path d="M24.45 267.55 L21.05 269.05 L24.45 270.55 Z" fill="#a6a6a6"/>
<rect x="23.85" y="271.24" width="11.70" height="1.6" fill="#828282"/>
<rect x="21.75" y="274.17" width="15.30" height="1.7" fill="#8e8e8e"/>
<path d="M24.45 273.52 L21.05 275.02 L24.45 276.52 Z" fill="#a6a6a6"/>
<rect x="23.85" y="277.20" width="11.70" height="1.6" fill="#828282"/>
<rect x="21.75" y="280.14" width="15.30" height="1.7" fill="#8e8e8e"/>
<path d="M24.45 279.49 L21.05 280.99 L24.45 282.49 Z" fill="#a6a6a6"/>
<text x="35.60" y="17.45" font-size="6.0" fill="#dcdcdc" stroke="#dcdcdc" stroke-width="0.12" textLength="3.3" lengthAdjust="spacingAndGlyphs">0</text>
<text x="51.95" y="17.45" font-size="6.0" fill="#dcdcdc" stroke="#dcdcdc" stroke-width="0.12" textLength="6.4" lengthAdjust="spacingAndGlyphs">30</text>
<text x="69.86" y="17.45" font-size="6.0" fill="#dcdcdc" stroke="#dcdcdc" stroke-width="0.12" textLength="6.4" lengthAdjust="spacingAndGlyphs">60</text>
<text x="87.76" y="17.45" font-size="6.0" fill="#dcdcdc" stroke="#dcdcdc" stroke-width="0.12" textLength="6.4" lengthAdjust="spacingAndGlyphs">90</text>
<text x="104.02" y="17.45" font-size="6.0" fill="#dcdcdc" stroke="#dcdcdc" stroke-width="0.12" textLength="9.7" lengthAdjust="spacingAndGlyphs">120</text>
<text x="121.92" y="17.45" font-size="6.0" fill="#dcdcdc" stroke="#dcdcdc" stroke-width="0.12" textLength="9.7" lengthAdjust="spacingAndGlyphs">150</text>
<text x="139.82" y="17.45" font-size="6.0" fill="#dcdcdc" stroke="#dcdcdc" stroke-width="0.12" textLength="9.7" lengthAdjust="spacingAndGlyphs">180</text>
<text x="157.73" y="17.45" font-size="6.0" fill="#dcdcdc" stroke="#dcdcdc" stroke-width="0.12" textLength="9.7" lengthAdjust="spacingAndGlyphs">210</text>
<text x="175.63" y="17.45" font-size="6.0" fill="#dcdcdc" stroke="#dcdcdc" stroke-width="0.12" textLength="9.7" lengthAdjust="spacingAndGlyphs">240</text>
<text x="193.54" y="17.45" font-size="6.0" fill="#dcdcdc" stroke="#dcdcdc" stroke-width="0.12" textLength="9.7" lengthAdjust="spacingAndGlyphs">270</text>
<text x="211.44" y="17.45" font-size="6.0" fill="#dcdcdc" stroke="#dcdcdc" stroke-width="0.12" textLength="9.7" lengthAdjust="spacingAndGlyphs">300</text>
<text x="229.34" y="17.45" font-size="6.0" fill="#dcdcdc" stroke="#dcdcdc" stroke-width="0.12" textLength="9.7" lengthAdjust="spacingAndGlyphs">330</text>
<text x="247.25" y="17.45" font-size="6.0" fill="#dcdcdc" stroke="#dcdcdc" stroke-width="0.12" textLength="9.7" lengthAdjust="spacingAndGlyphs">360</text>
<text x="265.15" y="17.45" font-size="6.0" fill="#dcdcdc" stroke="#dcdcdc" stroke-width="0.12" textLength="9.7" lengthAdjust="spacingAndGlyphs">390</text>
<text x="283.06" y="17.45" font-size="6.0" fill="#dcdcdc" stroke="#dcdcdc" stroke-width="0.12" textLength="9.7" lengthAdjust="spacingAndGlyphs">420</text>
<text x="300.96" y="17.45" font-size="6.0" fill="#dcdcdc" stroke="#dcdcdc" stroke-width="0.12" textLength="9.7" lengthAdjust="spacingAndGlyphs">450</text>
<text x="318.86" y="17.45" font-size="6.0" fill="#dcdcdc" stroke="#dcdcdc" stroke-width="0.12" textLength="9.7" lengthAdjust="spacingAndGlyphs">480</text>
<text x="336.77" y="17.45" font-size="6.0" fill="#dcdcdc" stroke="#dcdcdc" stroke-width="0.12" textLength="9.7" lengthAdjust="spacingAndGlyphs">510</text>
<text x="354.67" y="17.45" font-size="6.0" fill="#dcdcdc" stroke="#dcdcdc" stroke-width="0.12" textLength="9.7" lengthAdjust="spacingAndGlyphs">540</text>
<text x="372.58" y="17.45" font-size="6.0" fill="#dcdcdc" stroke="#dcdcdc" stroke-width="0.12" textLength="9.7" lengthAdjust="spacingAndGlyphs">570</text>
<text x="390.48" y="17.45" font-size="6.0" fill="#dcdcdc" stroke="#dcdcdc" stroke-width="0.12" textLength="9.7" lengthAdjust="spacingAndGlyphs">600</text>
<text transform="translate(18.65,37.95) rotate(-90)" font-size="6.0" fill="#dcdcdc" stroke="#dcdcdc" stroke-width="0.12" textLength="3.3" lengthAdjust="spacingAndGlyphs">0</text>
<text transform="translate(18.65,57.40) rotate(-90)" font-size="6.0" fill="#dcdcdc" stroke="#dcdcdc" stroke-width="0.12" textLength="6.4" lengthAdjust="spacingAndGlyphs">30</text>
<text transform="translate(18.65,75.31) rotate(-90)" font-size="6.0" fill="#dcdcdc" stroke="#dcdcdc" stroke-width="0.12" textLength="6.4" lengthAdjust="spacingAndGlyphs">60</text>
<text transform="translate(18.65,93.21) rotate(-90)" font-size="6.0" fill="#dcdcdc" stroke="#dcdcdc" stroke-width="0.12" textLength="6.4" lengthAdjust="spacingAndGlyphs">90</text>
<text transform="translate(18.65,112.77) rotate(-90)" font-size="6.0" fill="#dcdcdc" stroke="#dcdcdc" stroke-width="0.12" textLength="9.7" lengthAdjust="spacingAndGlyphs">120</text>
<text transform="translate(18.65,130.67) rotate(-90)" font-size="6.0" fill="#dcdcdc" stroke="#dcdcdc" stroke-width="0.12" textLength="9.7" lengthAdjust="spacingAndGlyphs">150</text>
<text transform="translate(18.65,148.57) rotate(-90)" font-size="6.0" fill="#dcdcdc" stroke="#dcdcdc" stroke-width="0.12" textLength="9.7" lengthAdjust="spacingAndGlyphs">180</text>
<text transform="translate(18.65,166.48) rotate(-90)" font-size="6.0" fill="#dcdcdc" stroke="#dcdcdc" stroke-width="0.12" textLength="9.7" lengthAdjust="spacingAndGlyphs">210</text>
<text transform="translate(18.65,184.38) rotate(-90)" font-size="6.0" fill="#dcdcdc" stroke="#dcdcdc" stroke-width="0.12" textLength="9.7" lengthAdjust="spacingAndGlyphs">240</text>
<text transform="translate(18.65,202.29) rotate(-90)" font-size="6.0" fill="#dcdcdc" stroke="#dcdcdc" stroke-width="0.12" textLength="9.7" lengthAdjust="spacingAndGlyphs">270</text>
<text transform="translate(18.65,220.19) rotate(-90)" font-size="6.0" fill="#dcdcdc" stroke="#dcdcdc" stroke-width="0.12" textLength="9.7" lengthAdjust="spacingAndGlyphs">300</text>
<text transform="translate(18.65,238.09) rotate(-90)" font-size="6.0" fill="#dcdcdc" stroke="#dcdcdc" stroke-width="0.12" textLength="9.7" lengthAdjust="spacingAndGlyphs">330</text>
<text transform="translate(18.65,256.00) rotate(-90)" font-size="6.0" fill="#dcdcdc" stroke="#dcdcdc" stroke-width="0.12" textLength="9.7" lengthAdjust="spacingAndGlyphs">360</text>
<text transform="translate(18.65,273.90) rotate(-90)" font-size="6.0" fill="#dcdcdc" stroke="#dcdcdc" stroke-width="0.12" textLength="9.7" lengthAdjust="spacingAndGlyphs">390</text>
<text transform="translate(18.65,291.81) rotate(-90)" font-size="6.0" fill="#dcdcdc" stroke="#dcdcdc" stroke-width="0.12" textLength="9.7" lengthAdjust="spacingAndGlyphs">420</text>
<text x="8.95" y="17.45" font-size="6.0" fill="#dcdcdc" stroke="#dcdcdc" stroke-width="0.12" textLength="9.9" lengthAdjust="spacingAndGlyphs">mm</text>
<text x="29.45" y="24.70" font-size="6.4" fill="#dcdcdc">X</text>
<text transform="translate(25.65,32.90) rotate(-90)" font-size="6.4" fill="#dcdcdc">Y</text>
<rect x="37.25" y="36.30" width="84.5" height="1.2" fill="#b8b8b8" opacity="0.8"/>
<rect x="365.97" y="3" width="1" height="33.30" fill="#d99a22"/>
<text x="325.4" y="10.6" font-size="6.4" fill="#c9296b" textLength="17.3" lengthAdjust="spacingAndGlyphs">551.64</text>
<text x="347.7" y="10.6" font-size="6.4" fill="#d99a22" textLength="17.1" lengthAdjust="spacingAndGlyphs">551.64</text>
<text transform="translate(11.6,272.2) rotate(-90)" font-size="6.4" fill="#c9296b" stroke="#c9296b" stroke-width="0.1" text-anchor="end">191.54</text>
<rect x="58.80" y="60.05" width="145.10" height="202.75" fill="none" stroke="#ff0000" stroke-opacity="0.36" stroke-width="1.5"/>
</g>
</svg>
</div>
<div class="half" style="top:281px;height:276px;">
<svg width="670" height="276" viewBox="0 0 670 276">
<g transform="translate(410,139) scale(1.012) translate(-410,-142)"><rect x="396" y="0" width="274" height="300" fill="#2c2c2c"/>
<rect x="398" y="0" width="272" height="300" fill="#2f2f2f"/>
<rect x="396" y="0" width="1.2" height="300" fill="#222222"/>
<rect x="405.5" y="7" width="264.5" height="32.5" fill="#323232"/>
<rect x="405.5" y="40.5" width="264.5" height="69.3" fill="#323232"/>
<rect x="405.5" y="111.4" width="264.5" height="54.900000000000006" fill="#323232"/>
<rect x="405.5" y="167.8" width="264.5" height="106.69999999999999" fill="#323232"/>
<text x="472.20" y="24.70" font-size="6.9" fill="#e4e4e4" stroke="#e4e4e4" stroke-width="0.2" text-anchor="middle" textLength="34.00" lengthAdjust="spacingAndGlyphs">PATRONES</text>
<text x="603.40" y="24.70" font-size="6.9" fill="#e4e4e4" stroke="#e4e4e4" stroke-width="0.2" text-anchor="middle" textLength="28.80" lengthAdjust="spacingAndGlyphs">AJUSTES</text>
<rect x="541.5" y="28.4" width="124.5" height="2" fill="#c28f2e"/>
<text x="409.90" y="62.20" font-size="8.6" fill="#ececec" stroke="#ececec" stroke-width="0.2" textLength="12.60" lengthAdjust="spacingAndGlyphs">Ver</text>
<rect x="410.1" y="71.60" width="7.8" height="7.8" fill="none" stroke="#585858" stroke-width="1" rx="0.6"/>
<text x="426.10" y="78.80" font-size="7.1" fill="#e8e8e8" stroke="#e8e8e8" stroke-width="0.2" textLength="42.60" lengthAdjust="spacingAndGlyphs">Escala de color</text>
<rect x="410.1" y="83.30" width="7.8" height="7.8" fill="none" stroke="#585858" stroke-width="1" rx="0.6"/>
<text x="426.10" y="90.50" font-size="7.1" fill="#f0a51a" stroke="#f0a51a" stroke-width="0.2" textLength="64.00" lengthAdjust="spacingAndGlyphs">Detección de patrones</text>
<path d="M409.6 99.80 L412.6 102.80 L419.4 96.20" fill="none" stroke="#efa51c" stroke-width="1.1"/>
<text x="426.10" y="102.20" font-size="7.1" fill="#dc2a6e" stroke="#dc2a6e" stroke-width="0.2" textLength="68.60" lengthAdjust="spacingAndGlyphs">Detección de saturación</text>
<text x="410.00" y="134.30" font-size="8.6" fill="#ececec" stroke="#ececec" stroke-width="0.2" textLength="27.60" lengthAdjust="spacingAndGlyphs">Limpiar</text>
<rect x="409.70" y="142.4" width="25.50" height="16.3" fill="#3e3e3e" rx="1"/>
<circle cx="419.80" cy="151.0" r="2.4" fill="#d4d4d4"/>
<path d="M418.40 149.6 l2.6 2.6 M419.60 152.6 l1.2 -2.8" stroke="#3e3e3e" stroke-width="0.55" fill="none"/>
<text x="423.90" y="153.40" font-size="7.0" fill="#e8e8e8" stroke="#e8e8e8" stroke-width="0.2" textLength="3.70" lengthAdjust="spacingAndGlyphs">5</text>
<rect x="438.80" y="142.4" width="28.00" height="16.3" fill="#3e3e3e" rx="1"/>
<circle cx="448.20" cy="151.0" r="2.4" fill="#d4d4d4"/>
<path d="M446.80 149.6 l2.6 2.6 M448.00 152.6 l1.2 -2.8" stroke="#3e3e3e" stroke-width="0.55" fill="none"/>
<text x="452.30" y="153.40" font-size="7.0" fill="#e8e8e8" stroke="#e8e8e8" stroke-width="0.2" textLength="7.60" lengthAdjust="spacingAndGlyphs">10</text>
<rect x="470.60" y="142.4" width="29.70" height="16.3" fill="#3e3e3e" rx="1"/>
<circle cx="480.85" cy="151.0" r="2.4" fill="#d4d4d4"/>
<path d="M479.45 149.6 l2.6 2.6 M480.65 152.6 l1.2 -2.8" stroke="#3e3e3e" stroke-width="0.55" fill="none"/>
<text x="484.95" y="153.40" font-size="7.0" fill="#e8e8e8" stroke="#e8e8e8" stroke-width="0.2" textLength="7.60" lengthAdjust="spacingAndGlyphs">20</text>
<rect x="503.40" y="142.4" width="29.80" height="16.3" fill="#3e3e3e" rx="1"/>
<circle cx="513.70" cy="151.0" r="2.4" fill="#d4d4d4"/>
<path d="M512.30 149.6 l2.6 2.6 M513.50 152.6 l1.2 -2.8" stroke="#3e3e3e" stroke-width="0.55" fill="none"/>
<text x="517.80" y="153.40" font-size="7.0" fill="#e8e8e8" stroke="#e8e8e8" stroke-width="0.2" textLength="7.60" lengthAdjust="spacingAndGlyphs">30</text>
<rect x="537.00" y="142.4" width="33.40" height="16.3" fill="#3e3e3e" rx="1"/>
<text x="553.70" y="153.40" font-size="7.0" fill="#e8e8e8" stroke="#e8e8e8" stroke-width="0.2" text-anchor="middle" textLength="18.20" lengthAdjust="spacingAndGlyphs">Reset</text>
<text x="409.90" y="191.40" font-size="8.6" fill="#ececec" stroke="#ececec" stroke-width="0.2" textLength="76.20" lengthAdjust="spacingAndGlyphs">Ajuste de intensidad</text>
<rect x="409.90" y="199.6" width="66.60" height="16.40" fill="#3e3e3e" rx="1"/>
<text x="443.20" y="210.30" font-size="7.0" fill="#e6e6e6" stroke="#e6e6e6" stroke-width="0.2" text-anchor="middle" textLength="52.00" lengthAdjust="spacingAndGlyphs">Predeterminado</text>
<rect x="479.80" y="199.6" width="50.60" height="16.40" fill="#3e3e3e" rx="1"/>
<text x="505.10" y="210.30" font-size="7.0" fill="#e6e6e6" stroke="#e6e6e6" stroke-width="0.2" text-anchor="middle" textLength="35.50" lengthAdjust="spacingAndGlyphs">Color claro</text>
<rect x="534.00" y="199.6" width="65.70" height="16.40" fill="#3e3e3e" rx="1"/>
<text x="566.85" y="210.30" font-size="7.0" fill="#e6e6e6" stroke="#e6e6e6" stroke-width="0.2" text-anchor="middle" textLength="51.20" lengthAdjust="spacingAndGlyphs">Color muy claro</text>
<rect x="410.00" y="220.2" width="70.50" height="16.60" fill="#f5a30c" rx="1"/>
<text x="445.25" y="231.00" font-size="7.0" fill="#ffffff" stroke="#ffffff" stroke-width="0.2" text-anchor="middle" textLength="55.60" lengthAdjust="spacingAndGlyphs">Color súper claro</text>
<rect x="484.00" y="220.2" width="107.00" height="16.60" fill="#3e3e3e" rx="1"/>
<text x="537.50" y="231.00" font-size="7.0" fill="#e6e6e6" stroke="#e6e6e6" stroke-width="0.2" text-anchor="middle" textLength="91.30" lengthAdjust="spacingAndGlyphs">Color extremadamente claro</text>
<text x="410.00" y="247.90" font-size="6.7" fill="#f2a61e" stroke="#f2a61e" stroke-width="0.2" textLength="250.00" lengthAdjust="spacingAndGlyphs">Esta función ajusta la intensidad de la imagen procesada. Para comparación, calibración y</text>
<text x="410.00" y="258.35" font-size="6.7" fill="#f2a61e" stroke="#f2a61e" stroke-width="0.2" textLength="245.00" lengthAdjust="spacingAndGlyphs">control de proceso, se requiere la misma configuración de esta propiedad para todas las</text>
<text x="410.00" y="268.80" font-size="6.7" fill="#f2a61e" stroke="#f2a61e" stroke-width="0.2" textLength="28.00" lengthAdjust="spacingAndGlyphs">imágenes.</text></g>
<defs><clipPath id="vc1"><rect x="0" y="0" width="396" height="276"/></clipPath></defs>
<g clip-path="url(#vc1)">
<rect x="0" y="0" width="396" height="276" fill="#2b2b2b"/>
<rect x="33.70" y="32.95" width="362.30" height="243.75" fill="#ffffff"/>
<rect x="33.70" y="32.95" width="0.8" height="243.75" fill="#8080ff" opacity="0.6"/>
<rect x="395" y="32.95" width="1" height="243.75" fill="#8c8c8c"/>
<defs>
<linearGradient id="g2" x1="0" y1="81" x2="0" y2="235" gradientUnits="userSpaceOnUse"><stop offset="0.0000" stop-color="#000" stop-opacity="0.000"/><stop offset="0.0390" stop-color="#000" stop-opacity="0.030"/><stop offset="0.0649" stop-color="#000" stop-opacity="0.150"/><stop offset="0.0909" stop-color="#000" stop-opacity="0.320"/><stop offset="0.1234" stop-color="#000" stop-opacity="0.520"/><stop offset="0.1623" stop-color="#000" stop-opacity="0.680"/><stop offset="0.2143" stop-color="#000" stop-opacity="0.790"/><stop offset="0.2987" stop-color="#000" stop-opacity="0.870"/><stop offset="0.3766" stop-color="#000" stop-opacity="0.950"/><stop offset="0.4545" stop-color="#000" stop-opacity="1.000"/><stop offset="0.6494" stop-color="#000" stop-opacity="1.000"/><stop offset="0.7143" stop-color="#000" stop-opacity="0.950"/><stop offset="0.7662" stop-color="#000" stop-opacity="0.870"/><stop offset="0.8182" stop-color="#000" stop-opacity="0.740"/><stop offset="0.8701" stop-color="#000" stop-opacity="0.540"/><stop offset="0.9091" stop-color="#000" stop-opacity="0.340"/><stop offset="0.9416" stop-color="#000" stop-opacity="0.150"/><stop offset="0.9675" stop-color="#000" stop-opacity="0.040"/><stop offset="1.0000" stop-color="#000" stop-opacity="0.000"/></linearGradient>
<clipPath id="c2"><polygon points="48.80,79.00 213.20,79.00 212.40,235.00 44.80,235.00"/></clipPath>
<filter id="f2" x="39.8" y="76" width="178.39999999999998" height="164" filterUnits="userSpaceOnUse" color-interpolation-filters="sRGB">
<feTurbulence type="fractalNoise" baseFrequency="0.06 0.09" numOctaves="4" seed="11" result="t"/>
<feColorMatrix in="t" type="matrix" values="0 0 0 0 0  0 0 0 0 0  0 0 0 0 0  1.2 0 0 0 -0.09999999999999998" result="n"/>
<feTurbulence type="fractalNoise" baseFrequency="0.7" numOctaves="2" seed="18" result="t2"/>
<feColorMatrix in="t2" type="matrix" values="0 0 0 0 0  0 0 0 0 0  0 0 0 0 0  1.6 0 0 0 -0.30000000000000004" result="n2"/>
<feComposite in="SourceGraphic" in2="n" operator="arithmetic" k1="0.5" k2="0.82" k3="0" k4="0" result="m"/>
<feComposite in="m" in2="n2" operator="arithmetic" k1="0.15" k2="0.93" k3="0" k4="0"/>
</filter>
</defs>
<g clip-path="url(#c2)"><g filter="url(#f2)"><rect x="42.8" y="81" width="172.39999999999998" height="154" fill="url(#g2)"/></g></g><defs><linearGradient id="sgb1" x1="0" y1="71" x2="0" y2="95" gradientUnits="userSpaceOnUse"><stop offset="0" stop-color="#000" stop-opacity="0.0"/><stop offset="1" stop-color="#000" stop-opacity="0.22"/></linearGradient>
<filter id="sfb1" x="48" y="71" width="166" height="24" filterUnits="userSpaceOnUse" color-interpolation-filters="sRGB">
<feTurbulence type="fractalNoise" baseFrequency="0.93" numOctaves="1" seed="31" result="t"/>
<feColorMatrix in="t" type="matrix" values="0 0 0 0 0  0 0 0 0 0  0 0 0 0 0  1 0 0 0 0" result="n"/>
<feComposite in="SourceGraphic" in2="n" operator="arithmetic" k1="0" k2="3" k3="3" k4="-2.4000000000000004" result="s"/>
<feColorMatrix in="s" type="matrix" values="0 0 0 0 0  0 0 0 0 0  0 0 0 0 0  0 0 0 0.3 0"/>
</filter></defs>
<rect x="48" y="71" width="166" height="24" fill="url(#sgb1)" filter="url(#sfb1)"/><defs><linearGradient id="sgb2" x1="0" y1="226" x2="0" y2="247" gradientUnits="userSpaceOnUse"><stop offset="0" stop-color="#000" stop-opacity="0.2"/><stop offset="1" stop-color="#000" stop-opacity="0.0"/></linearGradient>
<filter id="sfb2" x="44" y="226" width="169" height="21" filterUnits="userSpaceOnUse" color-interpolation-filters="sRGB">
<feTurbulence type="fractalNoise" baseFrequency="0.93" numOctaves="1" seed="32" result="t"/>
<feColorMatrix in="t" type="matrix" values="0 0 0 0 0  0 0 0 0 0  0 0 0 0 0  1 0 0 0 0" result="n"/>
<feComposite in="SourceGraphic" in2="n" operator="arithmetic" k1="0" k2="3" k3="3" k4="-2.4000000000000004" result="s"/>
<feColorMatrix in="s" type="matrix" values="0 0 0 0 0  0 0 0 0 0  0 0 0 0 0  0 0 0 0.3 0"/>
</filter></defs>
<rect x="44" y="226" width="169" height="21" fill="url(#sgb2)" filter="url(#sfb2)"/>
<defs><filter id="bf" x="40" y="130" width="180" height="50" filterUnits="userSpaceOnUse"><feTurbulence type="fractalNoise" baseFrequency="0.6" numOctaves="2" seed="5" result="t"/><feDisplacementMap in="SourceGraphic" in2="t" scale="5" xChannelSelector="R" yChannelSelector="G"/></filter></defs>
<g filter="url(#bf)" fill="#c1259f">
<ellipse transform="translate(55.00,159.00) rotate(0)" rx="7.00" ry="2.00"/>
<ellipse transform="translate(66.00,162.00) rotate(10)" rx="6.50" ry="4.00"/>
<ellipse transform="translate(50.00,162.80) rotate(0)" rx="1.80" ry="1.30"/>
<ellipse transform="translate(79.20,151.50) rotate(-20)" rx="3.80" ry="3.00"/>
<ellipse transform="translate(81.30,166.30) rotate(5)" rx="7.50" ry="4.50"/>
<ellipse transform="translate(104.00,164.00) rotate(0)" rx="11.00" ry="8.50"/>
<ellipse transform="translate(116.00,157.00) rotate(-30)" rx="6.50" ry="5.50"/>
<ellipse transform="translate(121.00,156.00) rotate(0)" rx="3.20" ry="6.00"/>
<ellipse transform="translate(96.00,166.00) rotate(0)" rx="6.00" ry="5.00"/>
<ellipse transform="translate(110.00,169.00) rotate(20)" rx="7.00" ry="4.00"/>
<ellipse transform="translate(135.00,164.50) rotate(0)" rx="8.50" ry="3.80"/>
<ellipse transform="translate(143.00,157.00) rotate(15)" rx="5.00" ry="1.80"/>
<ellipse transform="translate(162.50,151.80) rotate(30)" rx="8.50" ry="3.00"/>
<ellipse transform="translate(166.50,169.00) rotate(18)" rx="11.00" ry="3.60"/>
<ellipse transform="translate(178.00,163.50) rotate(-15)" rx="4.20" ry="1.80"/>
<ellipse transform="translate(187.70,146.80) rotate(0)" rx="2.40" ry="2.00"/>
<ellipse transform="translate(197.60,165.00) rotate(0)" rx="5.50" ry="5.00"/>
<ellipse transform="translate(197.00,171.00) rotate(0)" rx="2.00" ry="2.50"/>
<ellipse transform="translate(208.00,159.20) rotate(0)" rx="3.60" ry="5.30"/>
</g>
<rect x="33.70" y="17.35" width="362.30" height="0.9" fill="#5e5e5e"/>
<rect x="33.70" y="31.65" width="362.30" height="1.0" fill="#1e1e1e"/>
<rect x="32.85" y="15.85" width="1.7" height="16.20" fill="#8e8e8e"/>
<path d="M32.20 18.55 L33.70 15.15 L35.20 18.55 Z" fill="#a6a6a6"/>
<rect x="35.92" y="17.95" width="1.6" height="12.60" fill="#828282"/>
<rect x="38.88" y="15.85" width="1.7" height="16.20" fill="#8e8e8e"/>
<path d="M38.23 18.55 L39.73 15.15 L41.23 18.55 Z" fill="#a6a6a6"/>
<rect x="41.95" y="17.95" width="1.6" height="12.60" fill="#828282"/>
<rect x="44.91" y="15.85" width="1.7" height="16.20" fill="#8e8e8e"/>
<path d="M44.26 18.55 L45.76 15.15 L47.26 18.55 Z" fill="#a6a6a6"/>
<rect x="47.98" y="17.95" width="1.6" height="12.60" fill="#828282"/>
<rect x="50.94" y="15.85" width="1.7" height="16.20" fill="#8e8e8e"/>
<path d="M50.29 18.55 L51.79 15.15 L53.29 18.55 Z" fill="#a6a6a6"/>
<rect x="54.01" y="17.95" width="1.6" height="12.60" fill="#828282"/>
<rect x="56.97" y="15.85" width="1.7" height="16.20" fill="#8e8e8e"/>
<path d="M56.32 18.55 L57.82 15.15 L59.32 18.55 Z" fill="#a6a6a6"/>
<rect x="60.04" y="17.95" width="1.6" height="12.60" fill="#828282"/>
<rect x="63.00" y="15.85" width="1.7" height="16.20" fill="#8e8e8e"/>
<path d="M62.35 18.55 L63.85 15.15 L65.35 18.55 Z" fill="#a6a6a6"/>
<rect x="66.07" y="17.95" width="1.6" height="12.60" fill="#828282"/>
<rect x="69.03" y="15.85" width="1.7" height="16.20" fill="#8e8e8e"/>
<path d="M68.38 18.55 L69.88 15.15 L71.38 18.55 Z" fill="#a6a6a6"/>
<rect x="72.10" y="17.95" width="1.6" height="12.60" fill="#828282"/>
<rect x="75.06" y="15.85" width="1.7" height="16.20" fill="#8e8e8e"/>
<path d="M74.41 18.55 L75.91 15.15 L77.41 18.55 Z" fill="#a6a6a6"/>
<rect x="78.13" y="17.95" width="1.6" height="12.60" fill="#828282"/>
<rect x="81.09" y="15.85" width="1.7" height="16.20" fill="#8e8e8e"/>
<path d="M80.44 18.55 L81.94 15.15 L83.44 18.55 Z" fill="#a6a6a6"/>
<rect x="84.16" y="17.95" width="1.6" height="12.60" fill="#828282"/>
<rect x="87.12" y="15.85" width="1.7" height="16.20" fill="#8e8e8e"/>
<path d="M86.47 18.55 L87.97 15.15 L89.47 18.55 Z" fill="#a6a6a6"/>
<rect x="90.19" y="17.95" width="1.6" height="12.60" fill="#828282"/>
<rect x="93.15" y="15.85" width="1.7" height="16.20" fill="#8e8e8e"/>
<path d="M92.50 18.55 L94.00 15.15 L95.50 18.55 Z" fill="#a6a6a6"/>
<rect x="96.22" y="17.95" width="1.6" height="12.60" fill="#828282"/>
<rect x="99.18" y="15.85" width="1.7" height="16.20" fill="#8e8e8e"/>
<path d="M98.53 18.55 L100.03 15.15 L101.53 18.55 Z" fill="#a6a6a6"/>
<rect x="102.25" y="17.95" width="1.6" height="12.60" fill="#828282"/>
<rect x="105.21" y="15.85" width="1.7" height="16.20" fill="#8e8e8e"/>
<path d="M104.56 18.55 L106.06 15.15 L107.56 18.55 Z" fill="#a6a6a6"/>
<rect x="108.28" y="17.95" width="1.6" height="12.60" fill="#828282"/>
<rect x="111.24" y="15.85" width="1.7" height="16.20" fill="#8e8e8e"/>
<path d="M110.59 18.55 L112.09 15.15 L113.59 18.55 Z" fill="#a6a6a6"/>
<rect x="114.31" y="17.95" width="1.6" height="12.60" fill="#828282"/>
<rect x="117.27" y="15.85" width="1.7" height="16.20" fill="#8e8e8e"/>
<path d="M116.62 18.55 L118.12 15.15 L119.62 18.55 Z" fill="#a6a6a6"/>
<rect x="120.34" y="17.95" width="1.6" height="12.60" fill="#828282"/>
<rect x="123.30" y="15.85" width="1.7" height="16.20" fill="#8e8e8e"/>
<path d="M122.65 18.55 L124.15 15.15 L125.65 18.55 Z" fill="#a6a6a6"/>
<rect x="126.37" y="17.95" width="1.6" height="12.60" fill="#828282"/>
<rect x="129.33" y="15.85" width="1.7" height="16.20" fill="#8e8e8e"/>
<path d="M128.68 18.55 L130.18 15.15 L131.68 18.55 Z" fill="#a6a6a6"/>
<rect x="132.39" y="17.95" width="1.6" height="12.60" fill="#828282"/>
<rect x="135.36" y="15.85" width="1.7" height="16.20" fill="#8e8e8e"/>
<path d="M134.71 18.55 L136.21 15.15 L137.71 18.55 Z" fill="#a6a6a6"/>
<rect x="138.42" y="17.95" width="1.6" height="12.60" fill="#828282"/>
<rect x="141.39" y="15.85" width="1.7" height="16.20" fill="#8e8e8e"/>
<path d="M140.74 18.55 L142.24 15.15 L143.74 18.55 Z" fill="#a6a6a6"/>
<rect x="144.45" y="17.95" width="1.6" height="12.60" fill="#828282"/>
<rect x="147.42" y="15.85" width="1.7" height="16.20" fill="#8e8e8e"/>
<path d="M146.77 18.55 L148.27 15.15 L149.77 18.55 Z" fill="#a6a6a6"/>
<rect x="150.48" y="17.95" width="1.6" height="12.60" fill="#828282"/>
<rect x="153.45" y="15.85" width="1.7" height="16.20" fill="#8e8e8e"/>
<path d="M152.80 18.55 L154.30 15.15 L155.80 18.55 Z" fill="#a6a6a6"/>
<rect x="156.51" y="17.95" width="1.6" height="12.60" fill="#828282"/>
<rect x="159.48" y="15.85" width="1.7" height="16.20" fill="#8e8e8e"/>
<path d="M158.83 18.55 L160.33 15.15 L161.83 18.55 Z" fill="#a6a6a6"/>
<rect x="162.54" y="17.95" width="1.6" height="12.60" fill="#828282"/>
<rect x="165.51" y="15.85" width="1.7" height="16.20" fill="#8e8e8e"/>
<path d="M164.86 18.55 L166.36 15.15 L167.86 18.55 Z" fill="#a6a6a6"/>
<rect x="168.57" y="17.95" width="1.6" height="12.60" fill="#828282"/>
<rect x="171.54" y="15.85" width="1.7" height="16.20" fill="#8e8e8e"/>
<path d="M170.89 18.55 L172.39 15.15 L173.89 18.55 Z" fill="#a6a6a6"/>
<rect x="174.60" y="17.95" width="1.6" height="12.60" fill="#828282"/>
<rect x="177.57" y="15.85" width="1.7" height="16.20" fill="#8e8e8e"/>
<path d="M176.92 18.55 L178.42 15.15 L179.92 18.55 Z" fill="#a6a6a6"/>
<rect x="180.63" y="17.95" width="1.6" height="12.60" fill="#828282"/>
<rect x="183.60" y="15.85" width="1.7" height="16.20" fill="#8e8e8e"/>
<path d="M182.95 18.55 L184.45 15.15 L185.95 18.55 Z" fill="#a6a6a6"/>
<rect x="186.66" y="17.95" width="1.6" height="12.60" fill="#828282"/>
<rect x="189.63" y="15.85" width="1.7" height="16.20" fill="#8e8e8e"/>
<path d="M188.98 18.55 L190.48 15.15 L191.98 18.55 Z" fill="#a6a6a6"/>
<rect x="192.69" y="17.95" width="1.6" height="12.60" fill="#828282"/>
<rect x="195.66" y="15.85" width="1.7" height="16.20" fill="#8e8e8e"/>
<path d="M195.01 18.55 L196.51 15.15 L198.01 18.55 Z" fill="#a6a6a6"/>
<rect x="198.72" y="17.95" width="1.6" height="12.60" fill="#828282"/>
<rect x="201.69" y="15.85" width="1.7" height="16.20" fill="#8e8e8e"/>
<path d="M201.04 18.55 L202.54 15.15 L204.04 18.55 Z" fill="#a6a6a6"/>
<rect x="204.75" y="17.95" width="1.6" height="12.60" fill="#828282"/>
<rect x="207.72" y="15.85" width="1.7" height="16.20" fill="#8e8e8e"/>
<path d="M207.07 18.55 L208.57 15.15 L210.07 18.55 Z" fill="#a6a6a6"/>
<rect x="210.78" y="17.95" width="1.6" height="12.60" fill="#828282"/>
<rect x="213.75" y="15.85" width="1.7" height="16.20" fill="#8e8e8e"/>
<path d="M213.10 18.55 L214.60 15.15 L216.10 18.55 Z" fill="#a6a6a6"/>
<rect x="216.81" y="17.95" width="1.6" height="12.60" fill="#828282"/>
<rect x="219.78" y="15.85" width="1.7" height="16.20" fill="#8e8e8e"/>
<path d="M219.13 18.55 L220.63 15.15 L222.13 18.55 Z" fill="#a6a6a6"/>
<rect x="222.84" y="17.95" width="1.6" height="12.60" fill="#828282"/>
<rect x="225.81" y="15.85" width="1.7" height="16.20" fill="#8e8e8e"/>
<path d="M225.16 18.55 L226.66 15.15 L228.16 18.55 Z" fill="#a6a6a6"/>
<rect x="228.88" y="17.95" width="1.6" height="12.60" fill="#828282"/>
<rect x="231.84" y="15.85" width="1.7" height="16.20" fill="#8e8e8e"/>
<path d="M231.19 18.55 L232.69 15.15 L234.19 18.55 Z" fill="#a6a6a6"/>
<rect x="234.90" y="17.95" width="1.6" height="12.60" fill="#828282"/>
<rect x="237.87" y="15.85" width="1.7" height="16.20" fill="#8e8e8e"/>
<path d="M237.22 18.55 L238.72 15.15 L240.22 18.55 Z" fill="#a6a6a6"/>
<rect x="240.94" y="17.95" width="1.6" height="12.60" fill="#828282"/>
<rect x="243.90" y="15.85" width="1.7" height="16.20" fill="#8e8e8e"/>
<path d="M243.25 18.55 L244.75 15.15 L246.25 18.55 Z" fill="#a6a6a6"/>
<rect x="246.96" y="17.95" width="1.6" height="12.60" fill="#828282"/>
<rect x="249.93" y="15.85" width="1.7" height="16.20" fill="#8e8e8e"/>
<path d="M249.28 18.55 L250.78 15.15 L252.28 18.55 Z" fill="#a6a6a6"/>
<rect x="253.00" y="17.95" width="1.6" height="12.60" fill="#828282"/>
<rect x="255.96" y="15.85" width="1.7" height="16.20" fill="#8e8e8e"/>
<path d="M255.31 18.55 L256.81 15.15 L258.31 18.55 Z" fill="#a6a6a6"/>
<rect x="259.02" y="17.95" width="1.6" height="12.60" fill="#828282"/>
<rect x="261.99" y="15.85" width="1.7" height="16.20" fill="#8e8e8e"/>
<path d="M261.34 18.55 L262.84 15.15 L264.34 18.55 Z" fill="#a6a6a6"/>
<rect x="265.06" y="17.95" width="1.6" height="12.60" fill="#828282"/>
<rect x="268.02" y="15.85" width="1.7" height="16.20" fill="#8e8e8e"/>
<path d="M267.37 18.55 L268.87 15.15 L270.37 18.55 Z" fill="#a6a6a6"/>
<rect x="271.08" y="17.95" width="1.6" height="12.60" fill="#828282"/>
<rect x="274.05" y="15.85" width="1.7" height="16.20" fill="#8e8e8e"/>
<path d="M273.40 18.55 L274.90 15.15 L276.40 18.55 Z" fill="#a6a6a6"/>
<rect x="277.12" y="17.95" width="1.6" height="12.60" fill="#828282"/>
<rect x="280.08" y="15.85" width="1.7" height="16.20" fill="#8e8e8e"/>
<path d="M279.43 18.55 L280.93 15.15 L282.43 18.55 Z" fill="#a6a6a6"/>
<rect x="283.14" y="17.95" width="1.6" height="12.60" fill="#828282"/>
<rect x="286.11" y="15.85" width="1.7" height="16.20" fill="#8e8e8e"/>
<path d="M285.46 18.55 L286.96 15.15 L288.46 18.55 Z" fill="#a6a6a6"/>
<rect x="289.17" y="17.95" width="1.6" height="12.60" fill="#828282"/>
<rect x="292.14" y="15.85" width="1.7" height="16.20" fill="#8e8e8e"/>
<path d="M291.49 18.55 L292.99 15.15 L294.49 18.55 Z" fill="#a6a6a6"/>
<rect x="295.20" y="17.95" width="1.6" height="12.60" fill="#828282"/>
<rect x="298.17" y="15.85" width="1.7" height="16.20" fill="#8e8e8e"/>
<path d="M297.52 18.55 L299.02 15.15 L300.52 18.55 Z" fill="#a6a6a6"/>
<rect x="301.23" y="17.95" width="1.6" height="12.60" fill="#828282"/>
<rect x="304.20" y="15.85" width="1.7" height="16.20" fill="#8e8e8e"/>
<path d="M303.55 18.55 L305.05 15.15 L306.55 18.55 Z" fill="#a6a6a6"/>
<rect x="307.26" y="17.95" width="1.6" height="12.60" fill="#828282"/>
<rect x="310.23" y="15.85" width="1.7" height="16.20" fill="#8e8e8e"/>
<path d="M309.58 18.55 L311.08 15.15 L312.58 18.55 Z" fill="#a6a6a6"/>
<rect x="313.29" y="17.95" width="1.6" height="12.60" fill="#828282"/>
<rect x="316.26" y="15.85" width="1.7" height="16.20" fill="#8e8e8e"/>
<path d="M315.61 18.55 L317.11 15.15 L318.61 18.55 Z" fill="#a6a6a6"/>
<rect x="319.32" y="17.95" width="1.6" height="12.60" fill="#828282"/>
<rect x="322.29" y="15.85" width="1.7" height="16.20" fill="#8e8e8e"/>
<path d="M321.64 18.55 L323.14 15.15 L324.64 18.55 Z" fill="#a6a6a6"/>
<rect x="325.35" y="17.95" width="1.6" height="12.60" fill="#828282"/>
<rect x="328.32" y="15.85" width="1.7" height="16.20" fill="#8e8e8e"/>
<path d="M327.67 18.55 L329.17 15.15 L330.67 18.55 Z" fill="#a6a6a6"/>
<rect x="331.38" y="17.95" width="1.6" height="12.60" fill="#828282"/>
<rect x="334.35" y="15.85" width="1.7" height="16.20" fill="#8e8e8e"/>
<path d="M333.70 18.55 L335.20 15.15 L336.70 18.55 Z" fill="#a6a6a6"/>
<rect x="337.41" y="17.95" width="1.6" height="12.60" fill="#828282"/>
<rect x="340.38" y="15.85" width="1.7" height="16.20" fill="#8e8e8e"/>
<path d="M339.73 18.55 L341.23 15.15 L342.73 18.55 Z" fill="#a6a6a6"/>
<rect x="343.44" y="17.95" width="1.6" height="12.60" fill="#828282"/>
<rect x="346.41" y="15.85" width="1.7" height="16.20" fill="#8e8e8e"/>
<path d="M345.76 18.55 L347.26 15.15 L348.76 18.55 Z" fill="#a6a6a6"/>
<rect x="349.47" y="17.95" width="1.6" height="12.60" fill="#828282"/>
<rect x="352.44" y="15.85" width="1.7" height="16.20" fill="#8e8e8e"/>
<path d="M351.79 18.55 L353.29 15.15 L354.79 18.55 Z" fill="#a6a6a6"/>
<rect x="355.50" y="17.95" width="1.6" height="12.60" fill="#828282"/>
<rect x="358.47" y="15.85" width="1.7" height="16.20" fill="#8e8e8e"/>
<path d="M357.82 18.55 L359.32 15.15 L360.82 18.55 Z" fill="#a6a6a6"/>
<rect x="361.53" y="17.95" width="1.6" height="12.60" fill="#828282"/>
<rect x="364.50" y="15.85" width="1.7" height="16.20" fill="#8e8e8e"/>
<path d="M363.85 18.55 L365.35 15.15 L366.85 18.55 Z" fill="#a6a6a6"/>
<rect x="367.56" y="17.95" width="1.6" height="12.60" fill="#828282"/>
<rect x="370.53" y="15.85" width="1.7" height="16.20" fill="#8e8e8e"/>
<path d="M369.88 18.55 L371.38 15.15 L372.88 18.55 Z" fill="#a6a6a6"/>
<rect x="373.59" y="17.95" width="1.6" height="12.60" fill="#828282"/>
<rect x="376.56" y="15.85" width="1.7" height="16.20" fill="#8e8e8e"/>
<path d="M375.91 18.55 L377.41 15.15 L378.91 18.55 Z" fill="#a6a6a6"/>
<rect x="379.62" y="17.95" width="1.6" height="12.60" fill="#828282"/>
<rect x="382.59" y="15.85" width="1.7" height="16.20" fill="#8e8e8e"/>
<path d="M381.94 18.55 L383.44 15.15 L384.94 18.55 Z" fill="#a6a6a6"/>
<rect x="385.65" y="17.95" width="1.6" height="12.60" fill="#828282"/>
<rect x="388.62" y="15.85" width="1.7" height="16.20" fill="#8e8e8e"/>
<path d="M387.97 18.55 L389.47 15.15 L390.97 18.55 Z" fill="#a6a6a6"/>
<rect x="391.68" y="17.95" width="1.6" height="12.60" fill="#828282"/>
<rect x="394.65" y="15.85" width="1.7" height="16.20" fill="#8e8e8e"/>
<path d="M394.00 18.55 L395.50 15.15 L397.00 18.55 Z" fill="#a6a6a6"/>
<rect x="19.30" y="32.25" width="0.9" height="243.75" fill="#5e5e5e"/>
<rect x="17.80" y="31.40" width="15.70" height="1.7" fill="#8e8e8e"/>
<path d="M20.50 30.75 L17.10 32.25 L20.50 33.75 Z" fill="#a6a6a6"/>
<rect x="19.90" y="34.47" width="12.10" height="1.6" fill="#828282"/>
<rect x="17.80" y="37.43" width="15.70" height="1.7" fill="#8e8e8e"/>
<path d="M20.50 36.78 L17.10 38.28 L20.50 39.78 Z" fill="#a6a6a6"/>
<rect x="19.90" y="40.50" width="12.10" height="1.6" fill="#828282"/>
<rect x="17.80" y="43.46" width="15.70" height="1.7" fill="#8e8e8e"/>
<path d="M20.50 42.81 L17.10 44.31 L20.50 45.81 Z" fill="#a6a6a6"/>
<rect x="19.90" y="46.53" width="12.10" height="1.6" fill="#828282"/>
<rect x="17.80" y="49.49" width="15.70" height="1.7" fill="#8e8e8e"/>
<path d="M20.50 48.84 L17.10 50.34 L20.50 51.84 Z" fill="#a6a6a6"/>
<rect x="19.90" y="52.56" width="12.10" height="1.6" fill="#828282"/>
<rect x="17.80" y="55.52" width="15.70" height="1.7" fill="#8e8e8e"/>
<path d="M20.50 54.87 L17.10 56.37 L20.50 57.87 Z" fill="#a6a6a6"/>
<rect x="19.90" y="58.59" width="12.10" height="1.6" fill="#828282"/>
<rect x="17.80" y="61.55" width="15.70" height="1.7" fill="#8e8e8e"/>
<path d="M20.50 60.90 L17.10 62.40 L20.50 63.90 Z" fill="#a6a6a6"/>
<rect x="19.90" y="64.61" width="12.10" height="1.6" fill="#828282"/>
<rect x="17.80" y="67.58" width="15.70" height="1.7" fill="#8e8e8e"/>
<path d="M20.50 66.93 L17.10 68.43 L20.50 69.93 Z" fill="#a6a6a6"/>
<rect x="19.90" y="70.64" width="12.10" height="1.6" fill="#828282"/>
<rect x="17.80" y="73.61" width="15.70" height="1.7" fill="#8e8e8e"/>
<path d="M20.50 72.96 L17.10 74.46 L20.50 75.96 Z" fill="#a6a6a6"/>
<rect x="19.90" y="76.67" width="12.10" height="1.6" fill="#828282"/>
<rect x="17.80" y="79.64" width="15.70" height="1.7" fill="#8e8e8e"/>
<path d="M20.50 78.99 L17.10 80.49 L20.50 81.99 Z" fill="#a6a6a6"/>
<rect x="19.90" y="82.70" width="12.10" height="1.6" fill="#828282"/>
<rect x="17.80" y="85.67" width="15.70" height="1.7" fill="#8e8e8e"/>
<path d="M20.50 85.02 L17.10 86.52 L20.50 88.02 Z" fill="#a6a6a6"/>
<rect x="19.90" y="88.73" width="12.10" height="1.6" fill="#828282"/>
<rect x="17.80" y="91.70" width="15.70" height="1.7" fill="#8e8e8e"/>
<path d="M20.50 91.05 L17.10 92.55 L20.50 94.05 Z" fill="#a6a6a6"/>
<rect x="19.90" y="94.77" width="12.10" height="1.6" fill="#828282"/>
<rect x="17.80" y="97.73" width="15.70" height="1.7" fill="#8e8e8e"/>
<path d="M20.50 97.08 L17.10 98.58 L20.50 100.08 Z" fill="#a6a6a6"/>
<rect x="19.90" y="100.80" width="12.10" height="1.6" fill="#828282"/>
<rect x="17.80" y="103.76" width="15.70" height="1.7" fill="#8e8e8e"/>
<path d="M20.50 103.11 L17.10 104.61 L20.50 106.11 Z" fill="#a6a6a6"/>
<rect x="19.90" y="106.83" width="12.10" height="1.6" fill="#828282"/>
<rect x="17.80" y="109.79" width="15.70" height="1.7" fill="#8e8e8e"/>
<path d="M20.50 109.14 L17.10 110.64 L20.50 112.14 Z" fill="#a6a6a6"/>
<rect x="19.90" y="112.86" width="12.10" height="1.6" fill="#828282"/>
<rect x="17.80" y="115.82" width="15.70" height="1.7" fill="#8e8e8e"/>
<path d="M20.50 115.17 L17.10 116.67 L20.50 118.17 Z" fill="#a6a6a6"/>
<rect x="19.90" y="118.89" width="12.10" height="1.6" fill="#828282"/>
<rect x="17.80" y="121.85" width="15.70" height="1.7" fill="#8e8e8e"/>
<path d="M20.50 121.20 L17.10 122.70 L20.50 124.20 Z" fill="#a6a6a6"/>
<rect x="19.90" y="124.92" width="12.10" height="1.6" fill="#828282"/>
<rect x="17.80" y="127.88" width="15.70" height="1.7" fill="#8e8e8e"/>
<path d="M20.50 127.23 L17.10 128.73 L20.50 130.23 Z" fill="#a6a6a6"/>
<rect x="19.90" y="130.94" width="12.10" height="1.6" fill="#828282"/>
<rect x="17.80" y="133.91" width="15.70" height="1.7" fill="#8e8e8e"/>
<path d="M20.50 133.26 L17.10 134.76 L20.50 136.26 Z" fill="#a6a6a6"/>
<rect x="19.90" y="136.97" width="12.10" height="1.6" fill="#828282"/>
<rect x="17.80" y="139.94" width="15.70" height="1.7" fill="#8e8e8e"/>
<path d="M20.50 139.29 L17.10 140.79 L20.50 142.29 Z" fill="#a6a6a6"/>
<rect x="19.90" y="143.00" width="12.10" height="1.6" fill="#828282"/>
<rect x="17.80" y="145.97" width="15.70" height="1.7" fill="#8e8e8e"/>
<path d="M20.50 145.32 L17.10 146.82 L20.50 148.32 Z" fill="#a6a6a6"/>
<rect x="19.90" y="149.03" width="12.10" height="1.6" fill="#828282"/>
<rect x="17.80" y="152.00" width="15.70" height="1.7" fill="#8e8e8e"/>
<path d="M20.50 151.35 L17.10 152.85 L20.50 154.35 Z" fill="#a6a6a6"/>
<rect x="19.90" y="155.06" width="12.10" height="1.6" fill="#828282"/>
<rect x="17.80" y="158.03" width="15.70" height="1.7" fill="#8e8e8e"/>
<path d="M20.50 157.38 L17.10 158.88 L20.50 160.38 Z" fill="#a6a6a6"/>
<rect x="19.90" y="161.09" width="12.10" height="1.6" fill="#828282"/>
<rect x="17.80" y="164.06" width="15.70" height="1.7" fill="#8e8e8e"/>
<path d="M20.50 163.41 L17.10 164.91 L20.50 166.41 Z" fill="#a6a6a6"/>
<rect x="19.90" y="167.12" width="12.10" height="1.6" fill="#828282"/>
<rect x="17.80" y="170.09" width="15.70" height="1.7" fill="#8e8e8e"/>
<path d="M20.50 169.44 L17.10 170.94 L20.50 172.44 Z" fill="#a6a6a6"/>
<rect x="19.90" y="173.15" width="12.10" height="1.6" fill="#828282"/>
<rect x="17.80" y="176.12" width="15.70" height="1.7" fill="#8e8e8e"/>
<path d="M20.50 175.47 L17.10 176.97 L20.50 178.47 Z" fill="#a6a6a6"/>
<rect x="19.90" y="179.18" width="12.10" height="1.6" fill="#828282"/>
<rect x="17.80" y="182.15" width="15.70" height="1.7" fill="#8e8e8e"/>
<path d="M20.50 181.50 L17.10 183.00 L20.50 184.50 Z" fill="#a6a6a6"/>
<rect x="19.90" y="185.21" width="12.10" height="1.6" fill="#828282"/>
<rect x="17.80" y="188.18" width="15.70" height="1.7" fill="#8e8e8e"/>
<path d="M20.50 187.53 L17.10 189.03 L20.50 190.53 Z" fill="#a6a6a6"/>
<rect x="19.90" y="191.24" width="12.10" height="1.6" fill="#828282"/>
<rect x="17.80" y="194.21" width="15.70" height="1.7" fill="#8e8e8e"/>
<path d="M20.50 193.56 L17.10 195.06 L20.50 196.56 Z" fill="#a6a6a6"/>
<rect x="19.90" y="197.27" width="12.10" height="1.6" fill="#828282"/>
<rect x="17.80" y="200.24" width="15.70" height="1.7" fill="#8e8e8e"/>
<path d="M20.50 199.59 L17.10 201.09 L20.50 202.59 Z" fill="#a6a6a6"/>
<rect x="19.90" y="203.30" width="12.10" height="1.6" fill="#828282"/>
<rect x="17.80" y="206.27" width="15.70" height="1.7" fill="#8e8e8e"/>
<path d="M20.50 205.62 L17.10 207.12 L20.50 208.62 Z" fill="#a6a6a6"/>
<rect x="19.90" y="209.33" width="12.10" height="1.6" fill="#828282"/>
<rect x="17.80" y="212.30" width="15.70" height="1.7" fill="#8e8e8e"/>
<path d="M20.50 211.65 L17.10 213.15 L20.50 214.65 Z" fill="#a6a6a6"/>
<rect x="19.90" y="215.36" width="12.10" height="1.6" fill="#828282"/>
<rect x="17.80" y="218.33" width="15.70" height="1.7" fill="#8e8e8e"/>
<path d="M20.50 217.68 L17.10 219.18 L20.50 220.68 Z" fill="#a6a6a6"/>
<rect x="19.90" y="221.39" width="12.10" height="1.6" fill="#828282"/>
<rect x="17.80" y="224.36" width="15.70" height="1.7" fill="#8e8e8e"/>
<path d="M20.50 223.71 L17.10 225.21 L20.50 226.71 Z" fill="#a6a6a6"/>
<rect x="19.90" y="227.42" width="12.10" height="1.6" fill="#828282"/>
<rect x="17.80" y="230.39" width="15.70" height="1.7" fill="#8e8e8e"/>
<path d="M20.50 229.74 L17.10 231.24 L20.50 232.74 Z" fill="#a6a6a6"/>
<rect x="19.90" y="233.45" width="12.10" height="1.6" fill="#828282"/>
<rect x="17.80" y="236.42" width="15.70" height="1.7" fill="#8e8e8e"/>
<path d="M20.50 235.77 L17.10 237.27 L20.50 238.77 Z" fill="#a6a6a6"/>
<rect x="19.90" y="239.48" width="12.10" height="1.6" fill="#828282"/>
<rect x="17.80" y="242.45" width="15.70" height="1.7" fill="#8e8e8e"/>
<path d="M20.50 241.80 L17.10 243.30 L20.50 244.80 Z" fill="#a6a6a6"/>
<rect x="19.90" y="245.51" width="12.10" height="1.6" fill="#828282"/>
<rect x="17.80" y="248.48" width="15.70" height="1.7" fill="#8e8e8e"/>
<path d="M20.50 247.83 L17.10 249.33 L20.50 250.83 Z" fill="#a6a6a6"/>
<rect x="19.90" y="251.54" width="12.10" height="1.6" fill="#828282"/>
<rect x="17.80" y="254.51" width="15.70" height="1.7" fill="#8e8e8e"/>
<path d="M20.50 253.86 L17.10 255.36 L20.50 256.86 Z" fill="#a6a6a6"/>
<rect x="19.90" y="257.57" width="12.10" height="1.6" fill="#828282"/>
<rect x="17.80" y="260.54" width="15.70" height="1.7" fill="#8e8e8e"/>
<path d="M20.50 259.89 L17.10 261.39 L20.50 262.89 Z" fill="#a6a6a6"/>
<rect x="19.90" y="263.60" width="12.10" height="1.6" fill="#828282"/>
<rect x="17.80" y="266.57" width="15.70" height="1.7" fill="#8e8e8e"/>
<path d="M20.50 265.92 L17.10 267.42 L20.50 268.92 Z" fill="#a6a6a6"/>
<rect x="19.90" y="269.63" width="12.10" height="1.6" fill="#828282"/>
<rect x="17.80" y="272.60" width="15.70" height="1.7" fill="#8e8e8e"/>
<path d="M20.50 271.95 L17.10 273.45 L20.50 274.95 Z" fill="#a6a6a6"/>
<rect x="19.90" y="275.67" width="12.10" height="1.6" fill="#828282"/>
<text x="32.05" y="13.35" font-size="6.0" fill="#dcdcdc" stroke="#dcdcdc" stroke-width="0.12" textLength="3.3" lengthAdjust="spacingAndGlyphs">0</text>
<text x="48.59" y="13.35" font-size="6.0" fill="#dcdcdc" stroke="#dcdcdc" stroke-width="0.12" textLength="6.4" lengthAdjust="spacingAndGlyphs">30</text>
<text x="66.68" y="13.35" font-size="6.0" fill="#dcdcdc" stroke="#dcdcdc" stroke-width="0.12" textLength="6.4" lengthAdjust="spacingAndGlyphs">60</text>
<text x="84.77" y="13.35" font-size="6.0" fill="#dcdcdc" stroke="#dcdcdc" stroke-width="0.12" textLength="6.4" lengthAdjust="spacingAndGlyphs">90</text>
<text x="101.21" y="13.35" font-size="6.0" fill="#dcdcdc" stroke="#dcdcdc" stroke-width="0.12" textLength="9.7" lengthAdjust="spacingAndGlyphs">120</text>
<text x="119.30" y="13.35" font-size="6.0" fill="#dcdcdc" stroke="#dcdcdc" stroke-width="0.12" textLength="9.7" lengthAdjust="spacingAndGlyphs">150</text>
<text x="137.39" y="13.35" font-size="6.0" fill="#dcdcdc" stroke="#dcdcdc" stroke-width="0.12" textLength="9.7" lengthAdjust="spacingAndGlyphs">180</text>
<text x="155.48" y="13.35" font-size="6.0" fill="#dcdcdc" stroke="#dcdcdc" stroke-width="0.12" textLength="9.7" lengthAdjust="spacingAndGlyphs">210</text>
<text x="173.57" y="13.35" font-size="6.0" fill="#dcdcdc" stroke="#dcdcdc" stroke-width="0.12" textLength="9.7" lengthAdjust="spacingAndGlyphs">240</text>
<text x="191.66" y="13.35" font-size="6.0" fill="#dcdcdc" stroke="#dcdcdc" stroke-width="0.12" textLength="9.7" lengthAdjust="spacingAndGlyphs">270</text>
<text x="209.75" y="13.35" font-size="6.0" fill="#dcdcdc" stroke="#dcdcdc" stroke-width="0.12" textLength="9.7" lengthAdjust="spacingAndGlyphs">300</text>
<text x="227.84" y="13.35" font-size="6.0" fill="#dcdcdc" stroke="#dcdcdc" stroke-width="0.12" textLength="9.7" lengthAdjust="spacingAndGlyphs">330</text>
<text x="245.93" y="13.35" font-size="6.0" fill="#dcdcdc" stroke="#dcdcdc" stroke-width="0.12" textLength="9.7" lengthAdjust="spacingAndGlyphs">360</text>
<text x="264.02" y="13.35" font-size="6.0" fill="#dcdcdc" stroke="#dcdcdc" stroke-width="0.12" textLength="9.7" lengthAdjust="spacingAndGlyphs">390</text>
<text x="282.11" y="13.35" font-size="6.0" fill="#dcdcdc" stroke="#dcdcdc" stroke-width="0.12" textLength="9.7" lengthAdjust="spacingAndGlyphs">420</text>
<text x="300.20" y="13.35" font-size="6.0" fill="#dcdcdc" stroke="#dcdcdc" stroke-width="0.12" textLength="9.7" lengthAdjust="spacingAndGlyphs">450</text>
<text x="318.29" y="13.35" font-size="6.0" fill="#dcdcdc" stroke="#dcdcdc" stroke-width="0.12" textLength="9.7" lengthAdjust="spacingAndGlyphs">480</text>
<text x="336.38" y="13.35" font-size="6.0" fill="#dcdcdc" stroke="#dcdcdc" stroke-width="0.12" textLength="9.7" lengthAdjust="spacingAndGlyphs">510</text>
<text x="354.47" y="13.35" font-size="6.0" fill="#dcdcdc" stroke="#dcdcdc" stroke-width="0.12" textLength="9.7" lengthAdjust="spacingAndGlyphs">540</text>
<text x="372.56" y="13.35" font-size="6.0" fill="#dcdcdc" stroke="#dcdcdc" stroke-width="0.12" textLength="9.7" lengthAdjust="spacingAndGlyphs">570</text>
<text x="390.65" y="13.35" font-size="6.0" fill="#dcdcdc" stroke="#dcdcdc" stroke-width="0.12" textLength="9.7" lengthAdjust="spacingAndGlyphs">600</text>
<text transform="translate(15.10,33.90) rotate(-90)" font-size="6.0" fill="#dcdcdc" stroke="#dcdcdc" stroke-width="0.12" textLength="3.3" lengthAdjust="spacingAndGlyphs">0</text>
<text transform="translate(15.10,53.54) rotate(-90)" font-size="6.0" fill="#dcdcdc" stroke="#dcdcdc" stroke-width="0.12" textLength="6.4" lengthAdjust="spacingAndGlyphs">30</text>
<text transform="translate(15.10,71.63) rotate(-90)" font-size="6.0" fill="#dcdcdc" stroke="#dcdcdc" stroke-width="0.12" textLength="6.4" lengthAdjust="spacingAndGlyphs">60</text>
<text transform="translate(15.10,89.72) rotate(-90)" font-size="6.0" fill="#dcdcdc" stroke="#dcdcdc" stroke-width="0.12" textLength="6.4" lengthAdjust="spacingAndGlyphs">90</text>
<text transform="translate(15.10,109.46) rotate(-90)" font-size="6.0" fill="#dcdcdc" stroke="#dcdcdc" stroke-width="0.12" textLength="9.7" lengthAdjust="spacingAndGlyphs">120</text>
<text transform="translate(15.10,127.55) rotate(-90)" font-size="6.0" fill="#dcdcdc" stroke="#dcdcdc" stroke-width="0.12" textLength="9.7" lengthAdjust="spacingAndGlyphs">150</text>
<text transform="translate(15.10,145.64) rotate(-90)" font-size="6.0" fill="#dcdcdc" stroke="#dcdcdc" stroke-width="0.12" textLength="9.7" lengthAdjust="spacingAndGlyphs">180</text>
<text transform="translate(15.10,163.73) rotate(-90)" font-size="6.0" fill="#dcdcdc" stroke="#dcdcdc" stroke-width="0.12" textLength="9.7" lengthAdjust="spacingAndGlyphs">210</text>
<text transform="translate(15.10,181.82) rotate(-90)" font-size="6.0" fill="#dcdcdc" stroke="#dcdcdc" stroke-width="0.12" textLength="9.7" lengthAdjust="spacingAndGlyphs">240</text>
<text transform="translate(15.10,199.91) rotate(-90)" font-size="6.0" fill="#dcdcdc" stroke="#dcdcdc" stroke-width="0.12" textLength="9.7" lengthAdjust="spacingAndGlyphs">270</text>
<text transform="translate(15.10,218.00) rotate(-90)" font-size="6.0" fill="#dcdcdc" stroke="#dcdcdc" stroke-width="0.12" textLength="9.7" lengthAdjust="spacingAndGlyphs">300</text>
<text transform="translate(15.10,236.09) rotate(-90)" font-size="6.0" fill="#dcdcdc" stroke="#dcdcdc" stroke-width="0.12" textLength="9.7" lengthAdjust="spacingAndGlyphs">330</text>
<text transform="translate(15.10,254.18) rotate(-90)" font-size="6.0" fill="#dcdcdc" stroke="#dcdcdc" stroke-width="0.12" textLength="9.7" lengthAdjust="spacingAndGlyphs">360</text>
<text transform="translate(15.10,272.27) rotate(-90)" font-size="6.0" fill="#dcdcdc" stroke="#dcdcdc" stroke-width="0.12" textLength="9.7" lengthAdjust="spacingAndGlyphs">390</text>
<text transform="translate(15.10,290.36) rotate(-90)" font-size="6.0" fill="#dcdcdc" stroke="#dcdcdc" stroke-width="0.12" textLength="9.7" lengthAdjust="spacingAndGlyphs">420</text>
<text x="5.40" y="13.35" font-size="6.0" fill="#dcdcdc" stroke="#dcdcdc" stroke-width="0.12" textLength="9.9" lengthAdjust="spacingAndGlyphs">mm</text>
<text x="25.90" y="20.65" font-size="6.4" fill="#dcdcdc">X</text>
<text transform="translate(22.10,28.85) rotate(-90)" font-size="6.4" fill="#dcdcdc">Y</text>
<rect x="33.70" y="32.25" width="85" height="1.2" fill="#b8b8b8" opacity="0.8"/>
<rect x="394.80" y="0" width="1" height="32.25" fill="#d99a22"/>
<text x="353.6" y="6.3" font-size="6.4" fill="#c9296b" textLength="17.4" lengthAdjust="spacingAndGlyphs">599.67</text>
<text x="376.0" y="6.3" font-size="6.4" fill="#d99a22" textLength="17.4" lengthAdjust="spacingAndGlyphs">599.67</text>
<rect x="0.8" y="205.0" width="32.90" height="1" fill="#d99a22"/>
<text transform="translate(8.6,225.00) rotate(-90)" font-size="6.4" fill="#d99a22" textLength="17.3" lengthAdjust="spacingAndGlyphs">287.64</text>
<text transform="translate(7.8,246.80) rotate(-90)" font-size="6.4" fill="#c9296b" textLength="17.3" lengthAdjust="spacingAndGlyphs">287.64</text>
<rect x="55.50" y="56.50" width="146.40" height="204.30" fill="none" stroke="#ff0000" stroke-opacity="0.36" stroke-width="1.5"/>
</g>
</svg>
</div>
</body></html>
